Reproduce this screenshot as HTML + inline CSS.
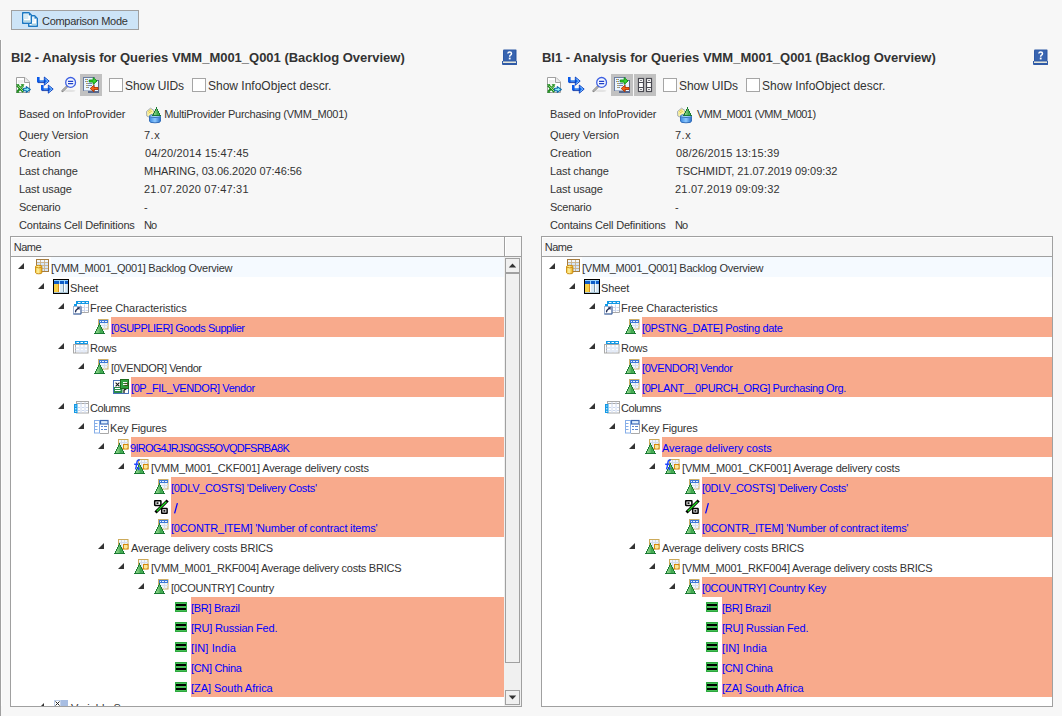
<!DOCTYPE html>
<html><head><meta charset="utf-8"><style>
html,body{margin:0;padding:0}
body{width:1062px;height:716px;overflow:hidden;position:relative;background:#f7f7f7;font-family:"Liberation Sans",sans-serif}
</style></head><body>
<svg width="0" height="0" style="position:absolute"><defs><linearGradient id="gPyr3" gradientUnits="userSpaceOnUse" x1="6" x2="15" y1="0" y2="0"><stop offset="0" stop-color="#a6e0a0"/><stop offset="0.45" stop-color="#6cc070"/><stop offset="0.6" stop-color="#3fa850"/><stop offset="1" stop-color="#5cc060"/></linearGradient>
<linearGradient id="gCyl" x1="0" x2="1" y1="0" y2="0"><stop offset="0" stop-color="#3a88e0"/><stop offset="0.5" stop-color="#8cc8ff"/><stop offset="1" stop-color="#2a70c8"/></linearGradient>
<linearGradient id="gPyr" gradientUnits="userSpaceOnUse" x1="1" x2="12" y1="0" y2="0"><stop offset="0" stop-color="#a6e0a0"/><stop offset="0.45" stop-color="#6cc070"/><stop offset="0.6" stop-color="#3fa850"/><stop offset="1" stop-color="#5cc060"/></linearGradient>
<linearGradient id="gPyr2" gradientUnits="userSpaceOnUse" x1="2" x2="13" y1="0" y2="0"><stop offset="0" stop-color="#a6e0a0"/><stop offset="0.45" stop-color="#6cc070"/><stop offset="0.6" stop-color="#3fa850"/><stop offset="1" stop-color="#5cc060"/></linearGradient>
<linearGradient id="gGreen" x1="0" x2="1" y1="0" y2="0"><stop offset="0" stop-color="#8fd88f"/><stop offset="0.5" stop-color="#3fae4f"/><stop offset="1" stop-color="#6ccf6c"/></linearGradient>
<linearGradient id="gGold" x1="0" x2="1"><stop offset="0" stop-color="#f7d24a"/><stop offset="0.4" stop-color="#fff1a0"/><stop offset="1" stop-color="#e8a812"/></linearGradient>





















</defs></svg>
<div style="position:absolute;left:0px;top:40px;width:1px;height:676px;background:#a0a0a0"></div><div style="position:absolute;left:1px;top:40px;width:1px;height:676px;background:#fdfdfd"></div><div style="position:absolute;left:11px;top:10px;width:126px;height:18px;border:1px solid #a0a0a0;background:#cde4f7"></div><svg style="position:absolute;left:22px;top:12px;overflow:visible" width="16" height="16"><path d="M6.7 3.7H12.6L15.3 6.4V14.3H6.7Z" fill="#fff" stroke="#1a78c2" stroke-width="1.4" stroke-linejoin="round"/>
  <rect x="8" y="5" width="4.5" height="5" fill="#e4f1f8"/>
  <rect x="9.5" y="11.5" width="5" height="1.6" fill="#a9d2e2"/>
  <circle cx="13.2" cy="5.8" r="0.9" fill="#1a78c2"/>
  <path d="M0.7 0.7H7L9.3 3V11.3H0.7Z" fill="#fff" stroke="#1a78c2" stroke-width="1.4" stroke-linejoin="round"/>
  <rect x="1.6" y="2" width="4.8" height="5" fill="#d6eaf4"/>
  <rect x="1.6" y="8.3" width="6.8" height="1.6" fill="#a9d2e2"/>
  <circle cx="7.6" cy="2.6" r="0.9" fill="#1a78c2"/></svg><svg style="position:absolute;left:501px;top:49px;overflow:visible" width="16" height="16"><path d="M2 1.5Q2 0.5 3 0.5H15Q15.5 0.5 15.5 1.5V14.5H2Z" fill="#2f5aa6"/>
  <path d="M1 12H16V15.5Q16 16 15 16H2Q1 16 1 15Z" fill="#2f5aa6"/>
  <rect x="2" y="12.5" width="13" height="1.4" fill="#f8f4e0"/>
  <rect x="3" y="1.5" width="11" height="10" fill="#3864b0"/>
  <path d="M6.8 4.5Q7 3 8.7 3Q10.5 3 10.5 4.6Q10.5 5.8 9.2 6.4Q8.7 6.7 8.7 7.7" stroke="#fff" stroke-width="1.5" fill="none"/>
  <rect x="7.8" y="8.6" width="1.8" height="1.8" fill="#fff"/></svg><svg style="position:absolute;left:15px;top:77px;overflow:visible" width="16" height="16"><path d="M1.5 0.5H10L14.5 5V15.5H1.5Z" fill="#fff" stroke="#a0a0a0"/>
  <path d="M9.5 0.5V5.5H14.5" fill="#ececec" stroke="#a0a0a0"/>
  <rect x="3" y="3" width="5.5" height="3.5" fill="#eeeeee"/>
  <path d="M8.3 8.2L2.2 14.8" stroke="#1d8a1d" stroke-width="2.2"/>
  <path d="M2.2 8.2L8.6 14.8" stroke="#1d8a1d" stroke-width="2.8"/>
  <path d="M2.8 8.6L8.2 14.2" stroke="#b8ec9c" stroke-width="0.9"/>
  <path d="M7.8 8.8L5.6 11.2" stroke="#b8ec9c" stroke-width="0.7"/>
  <path d="M1.2 7.8H4.2M5.8 7.8H9.2M1.2 15.2H4.2" stroke="#1d8a1d" stroke-width="1.1"/>
  <path d="M8.6 11.3H11.3V9.6L15.3 12.5L11.3 15.4V13.7H8.6Z" fill="#86f0f4" stroke="#0a66a8" stroke-width="1.1" stroke-linejoin="round"/></svg><svg style="position:absolute;left:37px;top:77px;overflow:visible" width="16" height="16"><g transform="translate(0,0)">
  <rect x="0" y="0" width="2.6" height="5.3" fill="#0a5ae8"/>
  <rect x="0" y="3" width="8.5" height="2.3" fill="#0a5ae8"/>
  <path d="M1 5.6H8" stroke="#002a9a" stroke-width="0.8"/>
  <path d="M2.6 3.9H8" stroke="#b8e8ff" stroke-width="0.8"/>
  <polygon points="7.3,0 12.2,4.1 7.3,8.2" fill="#0a64f0" stroke="#0034b8" stroke-width="0.8" stroke-linejoin="round"/>
  <path d="M8.2 1.6L10.6 4.1L8.2 6.6" stroke="#b8e8ff" stroke-width="0.9" fill="none"/>
</g><g transform="translate(4,8)">
  <rect x="0" y="0" width="2.6" height="5.3" fill="#0a5ae8"/>
  <rect x="0" y="3" width="8.5" height="2.3" fill="#0a5ae8"/>
  <path d="M1 5.6H8" stroke="#002a9a" stroke-width="0.8"/>
  <path d="M2.6 3.9H8" stroke="#b8e8ff" stroke-width="0.8"/>
  <polygon points="7.3,0 12.2,4.1 7.3,8.2" fill="#0a64f0" stroke="#0034b8" stroke-width="0.8" stroke-linejoin="round"/>
  <path d="M8.2 1.6L10.6 4.1L8.2 6.6" stroke="#b8e8ff" stroke-width="0.9" fill="none"/>
</g></svg><svg style="position:absolute;left:61px;top:77px;overflow:visible" width="16" height="16"><ellipse cx="8.5" cy="13.8" rx="6" ry="1.2" fill="#000" opacity="0.08"/>
  <path d="M1.5 14L6 9.5" stroke="#8a8a8a" stroke-width="2.4" stroke-linecap="round"/>
  <path d="M1.5 14L6 9.5" stroke="#d8d8d8" stroke-width="0.8"/>
  <circle cx="9.6" cy="5.4" r="4.9" fill="#f4f8ff" stroke="#3d5fe0" stroke-width="1.3"/>
  <path d="M7 4.3H12.2M7 6.6H12.2" stroke="#2040c8" stroke-width="1.2"/></svg><div style="position:absolute;left:80px;top:74px;width:22px;height:22px;background:#c1c1c1"></div><svg style="position:absolute;left:83px;top:77px;overflow:visible" width="16" height="16"><rect x="5.5" y="3.5" width="10" height="12" fill="#eaf6ff" stroke="#56688e"/>
  <rect x="0.5" y="0.5" width="11" height="13" fill="#eaf6ff" stroke="#6e7ea0"/>
  <rect x="1" y="1" width="10.5" height="12.5" fill="#eaf6ff"/>
  <path d="M6 14.5H15" stroke="#56688e"/>
  <path d="M2 2.5H5M2 4.5H5M3 6.5H9M3 8.5H9M3 10.5H6" stroke="#7088b8" stroke-width="1"/>
  <path d="M3 2.5H4M3 4.5H4M3.5 6.5H4.5M3.5 8.5H4.5M3.5 10.5H4.5" stroke="#f0b020" stroke-width="1"/>
  <path d="M6.2 3H10.2V0.6L14 4L10.2 7.4V5H6.2Z" fill="#36d436" stroke="#0c8a0c" stroke-width="0.9" stroke-linejoin="round"/>
  <path d="M15 10.5H11V8.2L7.2 11.5L11 14.8V12.5H15Z" fill="#f4601a" stroke="#b03800" stroke-width="0.9" stroke-linejoin="round"/></svg><div style="position:absolute;left:109px;top:78px;width:12px;height:12px;border:1px solid #a5a5a5;background:#fff"></div><div style="position:absolute;left:192px;top:78px;width:12px;height:12px;border:1px solid #a5a5a5;background:#fff"></div><svg style="position:absolute;left:146px;top:107px;overflow:visible" width="16" height="16"><path d="M0.5 4.5L4.5 1.2L8 3.5V8.5L4 10.5L0.8 9Z" fill="#fbf3a8" stroke="#9aa4b0" stroke-width="0.9"/>
  <path d="M2.2 4.6L5.2 2.6M2.6 6.2L5.8 4.2" stroke="#e2c23a" stroke-width="0.9"/>
  <path d="M3.5 9V14.2Q3.5 15.8 9 15.8Q14.5 15.8 14.5 14.2V9Z" fill="url(#gCyl)" stroke="#2a66b4" stroke-width="0.9"/>
  <ellipse cx="9" cy="9" rx="5.5" ry="1.5" fill="#a8d8ff" stroke="#2a66b4" stroke-width="0.9"/>
  <rect x="10" y="0" width="1" height="1" fill="#1a7a34"/><rect x="10" y="1" width="1" height="1" fill="#1a7a34"/><rect x="9" y="2" width="3" height="1" fill="#1a7a34"/><rect x="10" y="2" width="1" height="1" fill="url(#gPyr3)"/><rect x="9" y="3" width="3" height="1" fill="#1a7a34"/><rect x="10" y="3" width="1" height="1" fill="url(#gPyr3)"/><rect x="8" y="4" width="5" height="1" fill="#1a7a34"/><rect x="9" y="4" width="3" height="1" fill="url(#gPyr3)"/><rect x="8" y="5" width="5" height="1" fill="#1a7a34"/><rect x="9" y="5" width="3" height="1" fill="url(#gPyr3)"/><rect x="7" y="6" width="7" height="1" fill="#1a7a34"/><rect x="8" y="6" width="5" height="1" fill="url(#gPyr3)"/><rect x="7" y="7" width="7" height="1" fill="#1a7a34"/><rect x="8" y="7" width="5" height="1" fill="url(#gPyr3)"/><rect x="6" y="8" width="9" height="1" fill="#1a7a34"/></svg><div style="position:absolute;left:10px;top:236px;width:510px;height:469px;border:1px solid #a0a0a0;background:#fff"></div><div style="position:absolute;left:11px;top:237px;width:510px;height:19px;background:#f7f7f7;border-top:1px solid #fff;border-left:1px solid #fff;box-sizing:border-box"></div><div style="position:absolute;left:11px;top:256px;width:510px;height:1px;background:#a0a0a0"></div><div style="position:absolute;left:504px;top:237px;width:1px;height:19px;background:#a0a0a0"></div><div style="position:absolute;left:505px;top:237px;width:1px;height:19px;background:#fff"></div><div style="position:absolute;left:504px;top:257px;width:17px;height:449px;background:#f0f0f0"></div><div style="position:absolute;left:505px;top:258px;width:13px;height:13px;border:1px solid #a0a0a0;background:#f0f0f0"></div><svg style="position:absolute;left:505px;top:258px" width="15" height="15"><polygon points="3.8,9.6 11.2,9.6 7.5,5.4" fill="#333"/></svg><div style="position:absolute;left:505px;top:273px;width:13px;height:388px;border:1px solid #a0a0a0;background:#f0f0f0"></div><div style="position:absolute;left:505px;top:690px;width:13px;height:13px;border:1px solid #a0a0a0;background:#f0f0f0"></div><svg style="position:absolute;left:505px;top:690px" width="15" height="15"><polygon points="3.8,5.4 11.2,5.4 7.5,9.6" fill="#333"/></svg><div style="position:absolute;left:51px;top:257px;width:453px;height:20px;background:#f5faff"></div><svg style="position:absolute;left:18px;top:263px" width="6" height="6"><polygon points="6,0 6,6 0,6" fill="#333"/></svg><svg style="position:absolute;left:33px;top:258px;overflow:visible" width="16" height="16"><rect x="3.5" y="1.5" width="12" height="12" fill="#d4e6fa" stroke="#a67c3e"/>
  <rect x="4" y="2" width="11" height="2.5" fill="#f2f8ff"/>
  <path d="M4 4.5H15M4 7.5H15M4 10.5H15M7.5 2V13M11.5 2V13" stroke="#c8b089" stroke-width="0.9"/>
  <path d="M2.6 8.3Q2.6 7.3 5.75 7.3Q8.9 7.3 8.9 8.3V14.8Q8.9 15.8 5.75 15.8Q2.6 15.8 2.6 14.8Z" fill="url(#gGold)" stroke="#c98b12" stroke-width="1"/>
  <path d="M2.8 9.2Q5.75 10.6 8.7 9.2" stroke="#c98b12" fill="none" stroke-width="0.9"/></svg><svg style="position:absolute;left:38px;top:283px" width="6" height="6"><polygon points="6,0 6,6 0,6" fill="#333"/></svg><svg style="position:absolute;left:53px;top:278px;overflow:visible" width="16" height="16"><rect x="0.5" y="1.5" width="15" height="14" fill="#d8ebf8" stroke="#000"/>
  <rect x="1" y="2" width="14" height="1" fill="#9ad6ff"/>
  <rect x="1" y="3" width="14" height="3" fill="#0c5cc8"/>
  <rect x="6" y="2" width="1" height="4" fill="#9ad6ff"/>
  <rect x="11" y="2" width="1" height="4" fill="#9ad6ff"/>
  <rect x="1" y="6" width="4" height="8.5" fill="#f6d048"/>
  <rect x="5" y="6" width="1" height="8.5" fill="#d8901e"/>
  <rect x="6" y="6" width="1" height="8.5" fill="#ffffff"/>
  <rect x="7" y="6" width="3" height="8.5" fill="#d6e9f6"/>
  <rect x="10" y="6" width="1" height="8.5" fill="#7a98aa"/>
  <rect x="11" y="6" width="1" height="8.5" fill="#ffffff"/>
  <rect x="12" y="6" width="2.5" height="8.5" fill="#d6e9f6"/>
  <rect x="14.5" y="6" width="0.5" height="8.5" fill="#9ab4c4"/>
  <rect x="1" y="14" width="14" height="1" fill="#a9c4d4"/></svg><svg style="position:absolute;left:58px;top:303px" width="6" height="6"><polygon points="6,0 6,6 0,6" fill="#333"/></svg><svg style="position:absolute;left:73px;top:298px;overflow:visible" width="16" height="16"><rect x="3" y="3" width="13" height="3" fill="#1299e6"/>
  <path d="M5 4.5H7.5M9 4.5H11.5M13 4.5H15" stroke="#e8f6ff" stroke-width="1"/>
  <rect x="3" y="6" width="12.5" height="8.5" fill="#fff"/>
  <path d="M15.5 6V14.5H8" stroke="#a9a9a9" fill="none"/>
  <path d="M7.5 6.5V14M11.5 6.5V14M9 9.5H11M12.5 9.5H15M9 12.5H11M12.5 12.5H15" stroke="#ccd6ec" stroke-width="1"/>
  <rect x="1" y="6" width="3" height="2.5" fill="#1299e6"/>
  <rect x="0.5" y="8.5" width="7.5" height="7.5" fill="#fff" stroke="#9fb4d4"/>
  <path d="M8 8.5V16H0.5" stroke="#3d5e98" fill="none"/>
  <path d="M3 14.3Q2 13.3 3 12.3L5.6 9.9" stroke="#1a2650" stroke-width="1.3" fill="none"/>
  <polygon points="3.8,9.6 6.9,8.9 6.3,12" fill="#1a2650"/></svg><div style="position:absolute;left:111px;top:317px;width:393px;height:20px;background:#f8aa8c"></div><svg style="position:absolute;left:93px;top:318px;overflow:visible" width="16" height="16"><rect x="5.5" y="1.5" width="9.5" height="9.5" fill="#eef4fc" stroke="#cdb06a"/>
  <rect x="6" y="2" width="9" height="3" fill="#3f7ad8"/>
  <rect x="7" y="3" width="1" height="1" fill="#e8f0ff"/><rect x="9" y="3" width="2" height="1" fill="#e8f0ff"/><rect x="12" y="3" width="2" height="1" fill="#e8f0ff"/>
  <rect x="6" y="5" width="1" height="5.5" fill="#3f7ad8"/>
  <path d="M8 7.5H15M11.5 5V11" stroke="#d8e0ee"/>
  <rect x="6" y="5" width="1" height="1" fill="#1a7a34"/><rect x="6" y="6" width="1" height="1" fill="#1a7a34"/><rect x="5" y="7" width="3" height="1" fill="#1a7a34"/><rect x="6" y="7" width="1" height="1" fill="url(#gPyr)"/><rect x="5" y="8" width="3" height="1" fill="#1a7a34"/><rect x="6" y="8" width="1" height="1" fill="url(#gPyr)"/><rect x="4" y="9" width="5" height="1" fill="#1a7a34"/><rect x="5" y="9" width="3" height="1" fill="url(#gPyr)"/><rect x="4" y="10" width="5" height="1" fill="#1a7a34"/><rect x="5" y="10" width="3" height="1" fill="url(#gPyr)"/><rect x="3" y="11" width="7" height="1" fill="#1a7a34"/><rect x="4" y="11" width="5" height="1" fill="url(#gPyr)"/><rect x="3" y="12" width="7" height="1" fill="#1a7a34"/><rect x="4" y="12" width="5" height="1" fill="url(#gPyr)"/><rect x="2" y="13" width="9" height="1" fill="#1a7a34"/><rect x="3" y="13" width="7" height="1" fill="url(#gPyr)"/><rect x="2" y="14" width="9" height="1" fill="#1a7a34"/><rect x="3" y="14" width="7" height="1" fill="url(#gPyr)"/><rect x="1" y="15" width="11" height="1" fill="#1a7a34"/></svg><svg style="position:absolute;left:58px;top:343px" width="6" height="6"><polygon points="6,0 6,6 0,6" fill="#333"/></svg><svg style="position:absolute;left:73px;top:338px;overflow:visible" width="16" height="16"><rect x="2" y="3" width="13" height="3" fill="#1299e6"/>
  <path d="M3.5 4.5H6M7.5 4.5H10M11.5 4.5H14" stroke="#fff" stroke-width="1"/>
  <rect x="0.5" y="6.5" width="14.5" height="8.5" fill="#fff" stroke="#a9a9a9"/>
  <path d="M2.5 7V15" stroke="#a9a9a9"/>
  <path d="M7 7V15M11 7V15M2 10H6M8 10H10M12 10H14M2 13H6M8 13H10M12 13H14" stroke="#ccd8ee" stroke-width="1"/></svg><svg style="position:absolute;left:78px;top:363px" width="6" height="6"><polygon points="6,0 6,6 0,6" fill="#333"/></svg><svg style="position:absolute;left:93px;top:358px;overflow:visible" width="16" height="16"><rect x="5.5" y="1.5" width="9.5" height="9.5" fill="#eef4fc" stroke="#cdb06a"/>
  <rect x="6" y="2" width="9" height="3" fill="#3f7ad8"/>
  <rect x="7" y="3" width="1" height="1" fill="#e8f0ff"/><rect x="9" y="3" width="2" height="1" fill="#e8f0ff"/><rect x="12" y="3" width="2" height="1" fill="#e8f0ff"/>
  <rect x="6" y="5" width="1" height="5.5" fill="#3f7ad8"/>
  <path d="M8 7.5H15M11.5 5V11" stroke="#d8e0ee"/>
  <rect x="6" y="5" width="1" height="1" fill="#1a7a34"/><rect x="6" y="6" width="1" height="1" fill="#1a7a34"/><rect x="5" y="7" width="3" height="1" fill="#1a7a34"/><rect x="6" y="7" width="1" height="1" fill="url(#gPyr)"/><rect x="5" y="8" width="3" height="1" fill="#1a7a34"/><rect x="6" y="8" width="1" height="1" fill="url(#gPyr)"/><rect x="4" y="9" width="5" height="1" fill="#1a7a34"/><rect x="5" y="9" width="3" height="1" fill="url(#gPyr)"/><rect x="4" y="10" width="5" height="1" fill="#1a7a34"/><rect x="5" y="10" width="3" height="1" fill="url(#gPyr)"/><rect x="3" y="11" width="7" height="1" fill="#1a7a34"/><rect x="4" y="11" width="5" height="1" fill="url(#gPyr)"/><rect x="3" y="12" width="7" height="1" fill="#1a7a34"/><rect x="4" y="12" width="5" height="1" fill="url(#gPyr)"/><rect x="2" y="13" width="9" height="1" fill="#1a7a34"/><rect x="3" y="13" width="7" height="1" fill="url(#gPyr)"/><rect x="2" y="14" width="9" height="1" fill="#1a7a34"/><rect x="3" y="14" width="7" height="1" fill="url(#gPyr)"/><rect x="1" y="15" width="11" height="1" fill="#1a7a34"/></svg><div style="position:absolute;left:131px;top:377px;width:373px;height:20px;background:#f8aa8c"></div><svg style="position:absolute;left:113px;top:378px;overflow:visible" width="16" height="16"><rect x="0.5" y="2.5" width="15" height="13" fill="#fff" stroke="#4a72b8"/>
  <rect x="1" y="9" width="8.5" height="6" fill="#2a8a4a"/>
  <path d="M2 10.5H7M2 12.5H7.5" stroke="#fff" stroke-width="1"/>
  <path d="M2.6 4.6L6.4 8.4M6.4 4.6L2.6 8.4" stroke="#1a1a1a" stroke-width="1.1"/>
  <path d="M11 15V12.2L13.4 10.6" stroke="#1a1a1a" stroke-width="1.3" fill="none"/>
  <rect x="7.5" y="1.5" width="8" height="9" fill="#30a040" stroke="#1c6a1c" stroke-width="1"/>
  <path d="M10 4.5H14M10 6.5H14" stroke="#fff" stroke-width="1"/>
  <path d="M11.5 5.4H15M11.5 7.4H15" stroke="#4a2a10" stroke-width="0.8"/></svg><svg style="position:absolute;left:58px;top:403px" width="6" height="6"><polygon points="6,0 6,6 0,6" fill="#333"/></svg><svg style="position:absolute;left:73px;top:398px;overflow:visible" width="16" height="16"><rect x="3.5" y="3.5" width="12" height="11.5" fill="#fff" stroke="#a9a9a9"/>
  <path d="M4 5.5H15" stroke="#a9a9a9"/>
  <path d="M8 4V15M12 4V15M5 9.5H7M9 9.5H11M13 9.5H15M5 12.5H7M9 12.5H11M13 12.5H15" stroke="#ccd8ee"/>
  <rect x="1" y="6" width="3.5" height="9" fill="#1299e6"/>
  <path d="M2.8 7.5V8.5M2.8 10V11.5M2.8 12.8V14" stroke="#fff" stroke-width="1"/></svg><svg style="position:absolute;left:78px;top:423px" width="6" height="6"><polygon points="6,0 6,6 0,6" fill="#333"/></svg><svg style="position:absolute;left:93px;top:418px;overflow:visible" width="16" height="16"><rect x="1.5" y="2.5" width="5" height="12.5" fill="#fff" stroke="#86aee8"/>
  <path d="M2 5.5H4.5M2 8.5H4.5M2 11.5H4.5" stroke="#86aee8"/>
  <rect x="7" y="6" width="8.5" height="9" fill="#fff"/>
  <path d="M15.5 6V15.5H7" stroke="#a9a9a9" fill="none"/>
  <rect x="7.5" y="2.5" width="7.5" height="3.5" fill="#dff0ff" stroke="#3d6ab8" stroke-width="1.2"/>
  <path d="M8 8.5H10M11 8.5H14M8 11.5H10M11 11.5H14" stroke="#5a86d0"/></svg><div style="position:absolute;left:131px;top:437px;width:373px;height:20px;background:#f8aa8c"></div><svg style="position:absolute;left:98px;top:443px" width="6" height="6"><polygon points="6,0 6,6 0,6" fill="#333"/></svg><svg style="position:absolute;left:113px;top:438px;overflow:visible" width="16" height="16"><rect x="5.5" y="1.5" width="9.5" height="9" fill="#f2f6fc" stroke="#ccaa5a"/>
  <path d="M6 4.5H15M8.5 2V10M11.5 2V6" stroke="#d4dcec"/>
  <rect x="10.5" y="6.5" width="4.5" height="4.5" fill="#fff0a8" stroke="#d4880e" stroke-width="1.1"/>
  <path d="M12.75 7V11M11 8.75H15" stroke="#f8e090" stroke-width="0.6"/><rect x="6" y="5" width="1" height="1" fill="#1a7a34"/><rect x="6" y="6" width="1" height="1" fill="#1a7a34"/><rect x="5" y="7" width="3" height="1" fill="#1a7a34"/><rect x="6" y="7" width="1" height="1" fill="url(#gPyr)"/><rect x="5" y="8" width="3" height="1" fill="#1a7a34"/><rect x="6" y="8" width="1" height="1" fill="url(#gPyr)"/><rect x="4" y="9" width="5" height="1" fill="#1a7a34"/><rect x="5" y="9" width="3" height="1" fill="url(#gPyr)"/><rect x="4" y="10" width="5" height="1" fill="#1a7a34"/><rect x="5" y="10" width="3" height="1" fill="url(#gPyr)"/><rect x="3" y="11" width="7" height="1" fill="#1a7a34"/><rect x="4" y="11" width="5" height="1" fill="url(#gPyr)"/><rect x="3" y="12" width="7" height="1" fill="#1a7a34"/><rect x="4" y="12" width="5" height="1" fill="url(#gPyr)"/><rect x="2" y="13" width="9" height="1" fill="#1a7a34"/><rect x="3" y="13" width="7" height="1" fill="url(#gPyr)"/><rect x="2" y="14" width="9" height="1" fill="#1a7a34"/><rect x="3" y="14" width="7" height="1" fill="url(#gPyr)"/><rect x="1" y="15" width="11" height="1" fill="#1a7a34"/></svg><svg style="position:absolute;left:118px;top:463px" width="6" height="6"><polygon points="6,0 6,6 0,6" fill="#333"/></svg><svg style="position:absolute;left:133px;top:458px;overflow:visible" width="16" height="16"><rect x="5.5" y="1.5" width="9.5" height="9" fill="#f2f6fc" stroke="#ccaa5a"/>
  <path d="M6 4.5H15M8.5 2V10M11.5 2V6" stroke="#d4dcec"/>
  <rect x="10.5" y="6.5" width="4.5" height="4.5" fill="#fff0a8" stroke="#d4880e" stroke-width="1.1"/>
  <path d="M12.75 7V11M11 8.75H15" stroke="#f8e090" stroke-width="0.6"/><rect x="6" y="5" width="1" height="1" fill="#1a7a34"/><rect x="6" y="6" width="1" height="1" fill="#1a7a34"/><rect x="5" y="7" width="3" height="1" fill="#1a7a34"/><rect x="6" y="7" width="1" height="1" fill="url(#gPyr)"/><rect x="5" y="8" width="3" height="1" fill="#1a7a34"/><rect x="6" y="8" width="1" height="1" fill="url(#gPyr)"/><rect x="4" y="9" width="5" height="1" fill="#1a7a34"/><rect x="5" y="9" width="3" height="1" fill="url(#gPyr)"/><rect x="4" y="10" width="5" height="1" fill="#1a7a34"/><rect x="5" y="10" width="3" height="1" fill="url(#gPyr)"/><rect x="3" y="11" width="7" height="1" fill="#1a7a34"/><rect x="4" y="11" width="5" height="1" fill="url(#gPyr)"/><rect x="3" y="12" width="7" height="1" fill="#1a7a34"/><rect x="4" y="12" width="5" height="1" fill="url(#gPyr)"/><rect x="2" y="13" width="9" height="1" fill="#1a7a34"/><rect x="3" y="13" width="7" height="1" fill="url(#gPyr)"/><rect x="2" y="14" width="9" height="1" fill="#1a7a34"/><rect x="3" y="14" width="7" height="1" fill="url(#gPyr)"/><rect x="1" y="15" width="11" height="1" fill="#1a7a34"/>
  <path d="M6.8 2.3C5.2 1.6 4.2 2.6 3.9 4.5L3.3 8.2L2.6 11.4M1.2 6.2H5.6" stroke="#1f46ff" stroke-width="1.5" fill="none"/>
  <path d="M4.8 9.3L6 10.6L5 12" stroke="#1f46ff" stroke-width="1.3" fill="none"/></svg><div style="position:absolute;left:171px;top:477px;width:333px;height:20px;background:#f8aa8c"></div><svg style="position:absolute;left:153px;top:478px;overflow:visible" width="16" height="16"><rect x="5.5" y="1.5" width="9.5" height="9.5" fill="#eef4fc" stroke="#cdb06a"/>
  <rect x="6" y="2" width="9" height="3" fill="#3f7ad8"/>
  <rect x="7" y="3" width="1" height="1" fill="#e8f0ff"/><rect x="9" y="3" width="2" height="1" fill="#e8f0ff"/><rect x="12" y="3" width="2" height="1" fill="#e8f0ff"/>
  <rect x="6" y="5" width="1" height="5.5" fill="#3f7ad8"/>
  <path d="M8 7.5H15M11.5 5V11" stroke="#d8e0ee"/>
  <rect x="6" y="5" width="1" height="1" fill="#1a7a34"/><rect x="6" y="6" width="1" height="1" fill="#1a7a34"/><rect x="5" y="7" width="3" height="1" fill="#1a7a34"/><rect x="6" y="7" width="1" height="1" fill="url(#gPyr)"/><rect x="5" y="8" width="3" height="1" fill="#1a7a34"/><rect x="6" y="8" width="1" height="1" fill="url(#gPyr)"/><rect x="4" y="9" width="5" height="1" fill="#1a7a34"/><rect x="5" y="9" width="3" height="1" fill="url(#gPyr)"/><rect x="4" y="10" width="5" height="1" fill="#1a7a34"/><rect x="5" y="10" width="3" height="1" fill="url(#gPyr)"/><rect x="3" y="11" width="7" height="1" fill="#1a7a34"/><rect x="4" y="11" width="5" height="1" fill="url(#gPyr)"/><rect x="3" y="12" width="7" height="1" fill="#1a7a34"/><rect x="4" y="12" width="5" height="1" fill="url(#gPyr)"/><rect x="2" y="13" width="9" height="1" fill="#1a7a34"/><rect x="3" y="13" width="7" height="1" fill="url(#gPyr)"/><rect x="2" y="14" width="9" height="1" fill="#1a7a34"/><rect x="3" y="14" width="7" height="1" fill="url(#gPyr)"/><rect x="1" y="15" width="11" height="1" fill="#1a7a34"/></svg><div style="position:absolute;left:171px;top:497px;width:333px;height:20px;background:#f8aa8c"></div><svg style="position:absolute;left:153px;top:498px;overflow:visible" width="16" height="16"><rect x="1.7" y="2.7" width="6.2" height="4.8" rx="0.4" fill="#fff" stroke="#000" stroke-width="1.5"/>
  <rect x="3.5" y="4.3" width="2" height="1.6" fill="#000"/>
  <rect x="8.7" y="10.5" width="5.4" height="4.8" rx="0.4" fill="#fff" stroke="#000" stroke-width="1.5"/>
  <rect x="10.4" y="12.1" width="2" height="1.6" fill="#000"/>
  <path d="M3.6 13.4L13.6 3.6" stroke="#000" stroke-width="3" stroke-linecap="square"/>
  <path d="M3.8 13.2L13.4 3.8" stroke="#20e020" stroke-width="1.3"/></svg><svg style="position:absolute;left:171px;top:497px;overflow:visible" width="10" height="20"><path d="M3.6 16.3L6.4 6.2" stroke="#0000ff" stroke-width="1.25"/></svg><div style="position:absolute;left:171px;top:517px;width:333px;height:20px;background:#f8aa8c"></div><svg style="position:absolute;left:153px;top:518px;overflow:visible" width="16" height="16"><rect x="5.5" y="1.5" width="9.5" height="9.5" fill="#eef4fc" stroke="#cdb06a"/>
  <rect x="6" y="2" width="9" height="3" fill="#3f7ad8"/>
  <rect x="7" y="3" width="1" height="1" fill="#e8f0ff"/><rect x="9" y="3" width="2" height="1" fill="#e8f0ff"/><rect x="12" y="3" width="2" height="1" fill="#e8f0ff"/>
  <rect x="6" y="5" width="1" height="5.5" fill="#3f7ad8"/>
  <path d="M8 7.5H15M11.5 5V11" stroke="#d8e0ee"/>
  <rect x="6" y="5" width="1" height="1" fill="#1a7a34"/><rect x="6" y="6" width="1" height="1" fill="#1a7a34"/><rect x="5" y="7" width="3" height="1" fill="#1a7a34"/><rect x="6" y="7" width="1" height="1" fill="url(#gPyr)"/><rect x="5" y="8" width="3" height="1" fill="#1a7a34"/><rect x="6" y="8" width="1" height="1" fill="url(#gPyr)"/><rect x="4" y="9" width="5" height="1" fill="#1a7a34"/><rect x="5" y="9" width="3" height="1" fill="url(#gPyr)"/><rect x="4" y="10" width="5" height="1" fill="#1a7a34"/><rect x="5" y="10" width="3" height="1" fill="url(#gPyr)"/><rect x="3" y="11" width="7" height="1" fill="#1a7a34"/><rect x="4" y="11" width="5" height="1" fill="url(#gPyr)"/><rect x="3" y="12" width="7" height="1" fill="#1a7a34"/><rect x="4" y="12" width="5" height="1" fill="url(#gPyr)"/><rect x="2" y="13" width="9" height="1" fill="#1a7a34"/><rect x="3" y="13" width="7" height="1" fill="url(#gPyr)"/><rect x="2" y="14" width="9" height="1" fill="#1a7a34"/><rect x="3" y="14" width="7" height="1" fill="url(#gPyr)"/><rect x="1" y="15" width="11" height="1" fill="#1a7a34"/></svg><svg style="position:absolute;left:98px;top:543px" width="6" height="6"><polygon points="6,0 6,6 0,6" fill="#333"/></svg><svg style="position:absolute;left:113px;top:538px;overflow:visible" width="16" height="16"><rect x="5.5" y="1.5" width="9.5" height="9" fill="#f2f6fc" stroke="#ccaa5a"/>
  <path d="M6 4.5H15M8.5 2V10M11.5 2V6" stroke="#d4dcec"/>
  <rect x="10.5" y="6.5" width="4.5" height="4.5" fill="#fff0a8" stroke="#d4880e" stroke-width="1.1"/>
  <path d="M12.75 7V11M11 8.75H15" stroke="#f8e090" stroke-width="0.6"/><rect x="6" y="5" width="1" height="1" fill="#1a7a34"/><rect x="6" y="6" width="1" height="1" fill="#1a7a34"/><rect x="5" y="7" width="3" height="1" fill="#1a7a34"/><rect x="6" y="7" width="1" height="1" fill="url(#gPyr)"/><rect x="5" y="8" width="3" height="1" fill="#1a7a34"/><rect x="6" y="8" width="1" height="1" fill="url(#gPyr)"/><rect x="4" y="9" width="5" height="1" fill="#1a7a34"/><rect x="5" y="9" width="3" height="1" fill="url(#gPyr)"/><rect x="4" y="10" width="5" height="1" fill="#1a7a34"/><rect x="5" y="10" width="3" height="1" fill="url(#gPyr)"/><rect x="3" y="11" width="7" height="1" fill="#1a7a34"/><rect x="4" y="11" width="5" height="1" fill="url(#gPyr)"/><rect x="3" y="12" width="7" height="1" fill="#1a7a34"/><rect x="4" y="12" width="5" height="1" fill="url(#gPyr)"/><rect x="2" y="13" width="9" height="1" fill="#1a7a34"/><rect x="3" y="13" width="7" height="1" fill="url(#gPyr)"/><rect x="2" y="14" width="9" height="1" fill="#1a7a34"/><rect x="3" y="14" width="7" height="1" fill="url(#gPyr)"/><rect x="1" y="15" width="11" height="1" fill="#1a7a34"/></svg><svg style="position:absolute;left:118px;top:563px" width="6" height="6"><polygon points="6,0 6,6 0,6" fill="#333"/></svg><svg style="position:absolute;left:133px;top:558px;overflow:visible" width="16" height="16"><rect x="5.5" y="1.5" width="9.5" height="9" fill="#f2f6fc" stroke="#ccaa5a"/>
  <path d="M6 4.5H15M8.5 2V10M11.5 2V6" stroke="#d4dcec"/>
  <rect x="10.5" y="6.5" width="4.5" height="4.5" fill="#fff0a8" stroke="#d4880e" stroke-width="1.1"/>
  <path d="M12.75 7V11M11 8.75H15" stroke="#f8e090" stroke-width="0.6"/><rect x="6" y="5" width="1" height="1" fill="#1a7a34"/><rect x="6" y="6" width="1" height="1" fill="#1a7a34"/><rect x="5" y="7" width="3" height="1" fill="#1a7a34"/><rect x="6" y="7" width="1" height="1" fill="url(#gPyr)"/><rect x="5" y="8" width="3" height="1" fill="#1a7a34"/><rect x="6" y="8" width="1" height="1" fill="url(#gPyr)"/><rect x="4" y="9" width="5" height="1" fill="#1a7a34"/><rect x="5" y="9" width="3" height="1" fill="url(#gPyr)"/><rect x="4" y="10" width="5" height="1" fill="#1a7a34"/><rect x="5" y="10" width="3" height="1" fill="url(#gPyr)"/><rect x="3" y="11" width="7" height="1" fill="#1a7a34"/><rect x="4" y="11" width="5" height="1" fill="url(#gPyr)"/><rect x="3" y="12" width="7" height="1" fill="#1a7a34"/><rect x="4" y="12" width="5" height="1" fill="url(#gPyr)"/><rect x="2" y="13" width="9" height="1" fill="#1a7a34"/><rect x="3" y="13" width="7" height="1" fill="url(#gPyr)"/><rect x="2" y="14" width="9" height="1" fill="#1a7a34"/><rect x="3" y="14" width="7" height="1" fill="url(#gPyr)"/><rect x="1" y="15" width="11" height="1" fill="#1a7a34"/></svg><svg style="position:absolute;left:138px;top:583px" width="6" height="6"><polygon points="6,0 6,6 0,6" fill="#333"/></svg><svg style="position:absolute;left:153px;top:578px;overflow:visible" width="16" height="16"><rect x="5.5" y="1.5" width="9.5" height="9.5" fill="#eef4fc" stroke="#cdb06a"/>
  <rect x="6" y="2" width="9" height="3" fill="#3f7ad8"/>
  <rect x="7" y="3" width="1" height="1" fill="#e8f0ff"/><rect x="9" y="3" width="2" height="1" fill="#e8f0ff"/><rect x="12" y="3" width="2" height="1" fill="#e8f0ff"/>
  <rect x="6" y="5" width="1" height="5.5" fill="#3f7ad8"/>
  <path d="M8 7.5H15M11.5 5V11" stroke="#d8e0ee"/>
  <rect x="6" y="5" width="1" height="1" fill="#1a7a34"/><rect x="6" y="6" width="1" height="1" fill="#1a7a34"/><rect x="5" y="7" width="3" height="1" fill="#1a7a34"/><rect x="6" y="7" width="1" height="1" fill="url(#gPyr)"/><rect x="5" y="8" width="3" height="1" fill="#1a7a34"/><rect x="6" y="8" width="1" height="1" fill="url(#gPyr)"/><rect x="4" y="9" width="5" height="1" fill="#1a7a34"/><rect x="5" y="9" width="3" height="1" fill="url(#gPyr)"/><rect x="4" y="10" width="5" height="1" fill="#1a7a34"/><rect x="5" y="10" width="3" height="1" fill="url(#gPyr)"/><rect x="3" y="11" width="7" height="1" fill="#1a7a34"/><rect x="4" y="11" width="5" height="1" fill="url(#gPyr)"/><rect x="3" y="12" width="7" height="1" fill="#1a7a34"/><rect x="4" y="12" width="5" height="1" fill="url(#gPyr)"/><rect x="2" y="13" width="9" height="1" fill="#1a7a34"/><rect x="3" y="13" width="7" height="1" fill="url(#gPyr)"/><rect x="2" y="14" width="9" height="1" fill="#1a7a34"/><rect x="3" y="14" width="7" height="1" fill="url(#gPyr)"/><rect x="1" y="15" width="11" height="1" fill="#1a7a34"/></svg><div style="position:absolute;left:191px;top:597px;width:313px;height:20px;background:#f8aa8c"></div><svg style="position:absolute;left:173px;top:598px;overflow:visible" width="16" height="16"><rect x="2" y="4" width="12" height="10" fill="#46bf56"/>
  <path d="M2.5 4.5H13.5V13.5H2.5Z" stroke="#2da83e" fill="none"/>
  <rect x="3" y="6" width="10" height="2" fill="#000"/>
  <rect x="3" y="10" width="10" height="2" fill="#000"/></svg><div style="position:absolute;left:191px;top:617px;width:313px;height:20px;background:#f8aa8c"></div><svg style="position:absolute;left:173px;top:618px;overflow:visible" width="16" height="16"><rect x="2" y="4" width="12" height="10" fill="#46bf56"/>
  <path d="M2.5 4.5H13.5V13.5H2.5Z" stroke="#2da83e" fill="none"/>
  <rect x="3" y="6" width="10" height="2" fill="#000"/>
  <rect x="3" y="10" width="10" height="2" fill="#000"/></svg><div style="position:absolute;left:191px;top:637px;width:313px;height:20px;background:#f8aa8c"></div><svg style="position:absolute;left:173px;top:638px;overflow:visible" width="16" height="16"><rect x="2" y="4" width="12" height="10" fill="#46bf56"/>
  <path d="M2.5 4.5H13.5V13.5H2.5Z" stroke="#2da83e" fill="none"/>
  <rect x="3" y="6" width="10" height="2" fill="#000"/>
  <rect x="3" y="10" width="10" height="2" fill="#000"/></svg><div style="position:absolute;left:191px;top:657px;width:313px;height:20px;background:#f8aa8c"></div><svg style="position:absolute;left:173px;top:658px;overflow:visible" width="16" height="16"><rect x="2" y="4" width="12" height="10" fill="#46bf56"/>
  <path d="M2.5 4.5H13.5V13.5H2.5Z" stroke="#2da83e" fill="none"/>
  <rect x="3" y="6" width="10" height="2" fill="#000"/>
  <rect x="3" y="10" width="10" height="2" fill="#000"/></svg><div style="position:absolute;left:191px;top:677px;width:313px;height:20px;background:#f8aa8c"></div><svg style="position:absolute;left:173px;top:678px;overflow:visible" width="16" height="16"><rect x="2" y="4" width="12" height="10" fill="#46bf56"/>
  <path d="M2.5 4.5H13.5V13.5H2.5Z" stroke="#2da83e" fill="none"/>
  <rect x="3" y="6" width="10" height="2" fill="#000"/>
  <rect x="3" y="10" width="10" height="2" fill="#000"/></svg><svg style="position:absolute;left:38px;top:703px" width="6" height="6"><polygon points="6,0 6,6 0,6" fill="#333"/></svg><svg style="position:absolute;left:53px;top:698px;overflow:visible" width="16" height="16"><rect x="1" y="2" width="14" height="13" fill="#a7bde2"/>
  <rect x="1.5" y="2.5" width="6" height="6" fill="#fff" stroke="#c0d0ea"/>
  <path d="M2.5 3.5L6.5 7.5M6.5 3.5L2.5 7.5" stroke="#222"/></svg><svg style="position:absolute;left:1032px;top:49px;overflow:visible" width="16" height="16"><path d="M2 1.5Q2 0.5 3 0.5H15Q15.5 0.5 15.5 1.5V14.5H2Z" fill="#2f5aa6"/>
  <path d="M1 12H16V15.5Q16 16 15 16H2Q1 16 1 15Z" fill="#2f5aa6"/>
  <rect x="2" y="12.5" width="13" height="1.4" fill="#f8f4e0"/>
  <rect x="3" y="1.5" width="11" height="10" fill="#3864b0"/>
  <path d="M6.8 4.5Q7 3 8.7 3Q10.5 3 10.5 4.6Q10.5 5.8 9.2 6.4Q8.7 6.7 8.7 7.7" stroke="#fff" stroke-width="1.5" fill="none"/>
  <rect x="7.8" y="8.6" width="1.8" height="1.8" fill="#fff"/></svg><svg style="position:absolute;left:546px;top:77px;overflow:visible" width="16" height="16"><path d="M1.5 0.5H10L14.5 5V15.5H1.5Z" fill="#fff" stroke="#a0a0a0"/>
  <path d="M9.5 0.5V5.5H14.5" fill="#ececec" stroke="#a0a0a0"/>
  <rect x="3" y="3" width="5.5" height="3.5" fill="#eeeeee"/>
  <path d="M8.3 8.2L2.2 14.8" stroke="#1d8a1d" stroke-width="2.2"/>
  <path d="M2.2 8.2L8.6 14.8" stroke="#1d8a1d" stroke-width="2.8"/>
  <path d="M2.8 8.6L8.2 14.2" stroke="#b8ec9c" stroke-width="0.9"/>
  <path d="M7.8 8.8L5.6 11.2" stroke="#b8ec9c" stroke-width="0.7"/>
  <path d="M1.2 7.8H4.2M5.8 7.8H9.2M1.2 15.2H4.2" stroke="#1d8a1d" stroke-width="1.1"/>
  <path d="M8.6 11.3H11.3V9.6L15.3 12.5L11.3 15.4V13.7H8.6Z" fill="#86f0f4" stroke="#0a66a8" stroke-width="1.1" stroke-linejoin="round"/></svg><svg style="position:absolute;left:568px;top:77px;overflow:visible" width="16" height="16"><g transform="translate(0,0)">
  <rect x="0" y="0" width="2.6" height="5.3" fill="#0a5ae8"/>
  <rect x="0" y="3" width="8.5" height="2.3" fill="#0a5ae8"/>
  <path d="M1 5.6H8" stroke="#002a9a" stroke-width="0.8"/>
  <path d="M2.6 3.9H8" stroke="#b8e8ff" stroke-width="0.8"/>
  <polygon points="7.3,0 12.2,4.1 7.3,8.2" fill="#0a64f0" stroke="#0034b8" stroke-width="0.8" stroke-linejoin="round"/>
  <path d="M8.2 1.6L10.6 4.1L8.2 6.6" stroke="#b8e8ff" stroke-width="0.9" fill="none"/>
</g><g transform="translate(4,8)">
  <rect x="0" y="0" width="2.6" height="5.3" fill="#0a5ae8"/>
  <rect x="0" y="3" width="8.5" height="2.3" fill="#0a5ae8"/>
  <path d="M1 5.6H8" stroke="#002a9a" stroke-width="0.8"/>
  <path d="M2.6 3.9H8" stroke="#b8e8ff" stroke-width="0.8"/>
  <polygon points="7.3,0 12.2,4.1 7.3,8.2" fill="#0a64f0" stroke="#0034b8" stroke-width="0.8" stroke-linejoin="round"/>
  <path d="M8.2 1.6L10.6 4.1L8.2 6.6" stroke="#b8e8ff" stroke-width="0.9" fill="none"/>
</g></svg><svg style="position:absolute;left:592px;top:77px;overflow:visible" width="16" height="16"><ellipse cx="8.5" cy="13.8" rx="6" ry="1.2" fill="#000" opacity="0.08"/>
  <path d="M1.5 14L6 9.5" stroke="#8a8a8a" stroke-width="2.4" stroke-linecap="round"/>
  <path d="M1.5 14L6 9.5" stroke="#d8d8d8" stroke-width="0.8"/>
  <circle cx="9.6" cy="5.4" r="4.9" fill="#f4f8ff" stroke="#3d5fe0" stroke-width="1.3"/>
  <path d="M7 4.3H12.2M7 6.6H12.2" stroke="#2040c8" stroke-width="1.2"/></svg><div style="position:absolute;left:611px;top:74px;width:22px;height:22px;background:#c1c1c1"></div><svg style="position:absolute;left:614px;top:77px;overflow:visible" width="16" height="16"><rect x="5.5" y="3.5" width="10" height="12" fill="#eaf6ff" stroke="#56688e"/>
  <rect x="0.5" y="0.5" width="11" height="13" fill="#eaf6ff" stroke="#6e7ea0"/>
  <rect x="1" y="1" width="10.5" height="12.5" fill="#eaf6ff"/>
  <path d="M6 14.5H15" stroke="#56688e"/>
  <path d="M2 2.5H5M2 4.5H5M3 6.5H9M3 8.5H9M3 10.5H6" stroke="#7088b8" stroke-width="1"/>
  <path d="M3 2.5H4M3 4.5H4M3.5 6.5H4.5M3.5 8.5H4.5M3.5 10.5H4.5" stroke="#f0b020" stroke-width="1"/>
  <path d="M6.2 3H10.2V0.6L14 4L10.2 7.4V5H6.2Z" fill="#36d436" stroke="#0c8a0c" stroke-width="0.9" stroke-linejoin="round"/>
  <path d="M15 10.5H11V8.2L7.2 11.5L11 14.8V12.5H15Z" fill="#f4601a" stroke="#b03800" stroke-width="0.9" stroke-linejoin="round"/></svg><div style="position:absolute;left:634px;top:74px;width:22px;height:22px;background:#c1c1c1"></div><svg style="position:absolute;left:637px;top:77px;overflow:visible" width="16" height="16"><rect x="1.5" y="1.5" width="5" height="13" fill="#fff" stroke="#4a4a52" stroke-width="1.2"/>
  <rect x="9.5" y="1.5" width="5" height="13" fill="#fff" stroke="#4a4a52" stroke-width="1.2"/>
  <path d="M1.5 5.5H6.5M1.5 10.5H6.5M9.5 5.5H14.5M9.5 10.5H14.5" stroke="#4a4a52" stroke-width="1.2"/>
  <path d="M3.3 3.5H4.7M3.3 12.5H4.7M11.3 3.5H12.7M11.3 12.5H12.7" stroke="#4a4a52" stroke-width="1.2"/></svg><div style="position:absolute;left:663px;top:78px;width:12px;height:12px;border:1px solid #a5a5a5;background:#fff"></div><div style="position:absolute;left:746px;top:78px;width:12px;height:12px;border:1px solid #a5a5a5;background:#fff"></div><svg style="position:absolute;left:677px;top:107px;overflow:visible" width="16" height="16"><path d="M0.5 4.5L4.5 1.2L8 3.5V8.5L4 10.5L0.8 9Z" fill="#fbf3a8" stroke="#9aa4b0" stroke-width="0.9"/>
  <path d="M2.2 4.6L5.2 2.6M2.6 6.2L5.8 4.2" stroke="#e2c23a" stroke-width="0.9"/>
  <path d="M3.5 9V14.2Q3.5 15.8 9 15.8Q14.5 15.8 14.5 14.2V9Z" fill="url(#gCyl)" stroke="#2a66b4" stroke-width="0.9"/>
  <ellipse cx="9" cy="9" rx="5.5" ry="1.5" fill="#a8d8ff" stroke="#2a66b4" stroke-width="0.9"/>
  <rect x="10" y="0" width="1" height="1" fill="#1a7a34"/><rect x="10" y="1" width="1" height="1" fill="#1a7a34"/><rect x="9" y="2" width="3" height="1" fill="#1a7a34"/><rect x="10" y="2" width="1" height="1" fill="url(#gPyr3)"/><rect x="9" y="3" width="3" height="1" fill="#1a7a34"/><rect x="10" y="3" width="1" height="1" fill="url(#gPyr3)"/><rect x="8" y="4" width="5" height="1" fill="#1a7a34"/><rect x="9" y="4" width="3" height="1" fill="url(#gPyr3)"/><rect x="8" y="5" width="5" height="1" fill="#1a7a34"/><rect x="9" y="5" width="3" height="1" fill="url(#gPyr3)"/><rect x="7" y="6" width="7" height="1" fill="#1a7a34"/><rect x="8" y="6" width="5" height="1" fill="url(#gPyr3)"/><rect x="7" y="7" width="7" height="1" fill="#1a7a34"/><rect x="8" y="7" width="5" height="1" fill="url(#gPyr3)"/><rect x="6" y="8" width="9" height="1" fill="#1a7a34"/></svg><div style="position:absolute;left:541px;top:236px;width:510px;height:469px;border:1px solid #a0a0a0;background:#fff"></div><div style="position:absolute;left:542px;top:237px;width:510px;height:19px;background:#f7f7f7;border-top:1px solid #fff;border-left:1px solid #fff;box-sizing:border-box"></div><div style="position:absolute;left:542px;top:256px;width:510px;height:1px;background:#a0a0a0"></div><div style="position:absolute;left:582px;top:257px;width:470px;height:20px;background:#f5faff"></div><svg style="position:absolute;left:549px;top:263px" width="6" height="6"><polygon points="6,0 6,6 0,6" fill="#333"/></svg><svg style="position:absolute;left:564px;top:258px;overflow:visible" width="16" height="16"><rect x="3.5" y="1.5" width="12" height="12" fill="#d4e6fa" stroke="#a67c3e"/>
  <rect x="4" y="2" width="11" height="2.5" fill="#f2f8ff"/>
  <path d="M4 4.5H15M4 7.5H15M4 10.5H15M7.5 2V13M11.5 2V13" stroke="#c8b089" stroke-width="0.9"/>
  <path d="M2.6 8.3Q2.6 7.3 5.75 7.3Q8.9 7.3 8.9 8.3V14.8Q8.9 15.8 5.75 15.8Q2.6 15.8 2.6 14.8Z" fill="url(#gGold)" stroke="#c98b12" stroke-width="1"/>
  <path d="M2.8 9.2Q5.75 10.6 8.7 9.2" stroke="#c98b12" fill="none" stroke-width="0.9"/></svg><svg style="position:absolute;left:569px;top:283px" width="6" height="6"><polygon points="6,0 6,6 0,6" fill="#333"/></svg><svg style="position:absolute;left:584px;top:278px;overflow:visible" width="16" height="16"><rect x="0.5" y="1.5" width="15" height="14" fill="#d8ebf8" stroke="#000"/>
  <rect x="1" y="2" width="14" height="1" fill="#9ad6ff"/>
  <rect x="1" y="3" width="14" height="3" fill="#0c5cc8"/>
  <rect x="6" y="2" width="1" height="4" fill="#9ad6ff"/>
  <rect x="11" y="2" width="1" height="4" fill="#9ad6ff"/>
  <rect x="1" y="6" width="4" height="8.5" fill="#f6d048"/>
  <rect x="5" y="6" width="1" height="8.5" fill="#d8901e"/>
  <rect x="6" y="6" width="1" height="8.5" fill="#ffffff"/>
  <rect x="7" y="6" width="3" height="8.5" fill="#d6e9f6"/>
  <rect x="10" y="6" width="1" height="8.5" fill="#7a98aa"/>
  <rect x="11" y="6" width="1" height="8.5" fill="#ffffff"/>
  <rect x="12" y="6" width="2.5" height="8.5" fill="#d6e9f6"/>
  <rect x="14.5" y="6" width="0.5" height="8.5" fill="#9ab4c4"/>
  <rect x="1" y="14" width="14" height="1" fill="#a9c4d4"/></svg><svg style="position:absolute;left:589px;top:303px" width="6" height="6"><polygon points="6,0 6,6 0,6" fill="#333"/></svg><svg style="position:absolute;left:604px;top:298px;overflow:visible" width="16" height="16"><rect x="3" y="3" width="13" height="3" fill="#1299e6"/>
  <path d="M5 4.5H7.5M9 4.5H11.5M13 4.5H15" stroke="#e8f6ff" stroke-width="1"/>
  <rect x="3" y="6" width="12.5" height="8.5" fill="#fff"/>
  <path d="M15.5 6V14.5H8" stroke="#a9a9a9" fill="none"/>
  <path d="M7.5 6.5V14M11.5 6.5V14M9 9.5H11M12.5 9.5H15M9 12.5H11M12.5 12.5H15" stroke="#ccd6ec" stroke-width="1"/>
  <rect x="1" y="6" width="3" height="2.5" fill="#1299e6"/>
  <rect x="0.5" y="8.5" width="7.5" height="7.5" fill="#fff" stroke="#9fb4d4"/>
  <path d="M8 8.5V16H0.5" stroke="#3d5e98" fill="none"/>
  <path d="M3 14.3Q2 13.3 3 12.3L5.6 9.9" stroke="#1a2650" stroke-width="1.3" fill="none"/>
  <polygon points="3.8,9.6 6.9,8.9 6.3,12" fill="#1a2650"/></svg><div style="position:absolute;left:642px;top:317px;width:410px;height:20px;background:#f8aa8c"></div><svg style="position:absolute;left:624px;top:318px;overflow:visible" width="16" height="16"><rect x="5.5" y="1.5" width="9.5" height="9.5" fill="#eef4fc" stroke="#cdb06a"/>
  <rect x="6" y="2" width="9" height="3" fill="#3f7ad8"/>
  <rect x="7" y="3" width="1" height="1" fill="#e8f0ff"/><rect x="9" y="3" width="2" height="1" fill="#e8f0ff"/><rect x="12" y="3" width="2" height="1" fill="#e8f0ff"/>
  <rect x="6" y="5" width="1" height="5.5" fill="#3f7ad8"/>
  <path d="M8 7.5H15M11.5 5V11" stroke="#d8e0ee"/>
  <rect x="6" y="5" width="1" height="1" fill="#1a7a34"/><rect x="6" y="6" width="1" height="1" fill="#1a7a34"/><rect x="5" y="7" width="3" height="1" fill="#1a7a34"/><rect x="6" y="7" width="1" height="1" fill="url(#gPyr)"/><rect x="5" y="8" width="3" height="1" fill="#1a7a34"/><rect x="6" y="8" width="1" height="1" fill="url(#gPyr)"/><rect x="4" y="9" width="5" height="1" fill="#1a7a34"/><rect x="5" y="9" width="3" height="1" fill="url(#gPyr)"/><rect x="4" y="10" width="5" height="1" fill="#1a7a34"/><rect x="5" y="10" width="3" height="1" fill="url(#gPyr)"/><rect x="3" y="11" width="7" height="1" fill="#1a7a34"/><rect x="4" y="11" width="5" height="1" fill="url(#gPyr)"/><rect x="3" y="12" width="7" height="1" fill="#1a7a34"/><rect x="4" y="12" width="5" height="1" fill="url(#gPyr)"/><rect x="2" y="13" width="9" height="1" fill="#1a7a34"/><rect x="3" y="13" width="7" height="1" fill="url(#gPyr)"/><rect x="2" y="14" width="9" height="1" fill="#1a7a34"/><rect x="3" y="14" width="7" height="1" fill="url(#gPyr)"/><rect x="1" y="15" width="11" height="1" fill="#1a7a34"/></svg><svg style="position:absolute;left:589px;top:343px" width="6" height="6"><polygon points="6,0 6,6 0,6" fill="#333"/></svg><svg style="position:absolute;left:604px;top:338px;overflow:visible" width="16" height="16"><rect x="2" y="3" width="13" height="3" fill="#1299e6"/>
  <path d="M3.5 4.5H6M7.5 4.5H10M11.5 4.5H14" stroke="#fff" stroke-width="1"/>
  <rect x="0.5" y="6.5" width="14.5" height="8.5" fill="#fff" stroke="#a9a9a9"/>
  <path d="M2.5 7V15" stroke="#a9a9a9"/>
  <path d="M7 7V15M11 7V15M2 10H6M8 10H10M12 10H14M2 13H6M8 13H10M12 13H14" stroke="#ccd8ee" stroke-width="1"/></svg><div style="position:absolute;left:642px;top:357px;width:410px;height:20px;background:#f8aa8c"></div><svg style="position:absolute;left:624px;top:358px;overflow:visible" width="16" height="16"><rect x="5.5" y="1.5" width="9.5" height="9.5" fill="#eef4fc" stroke="#cdb06a"/>
  <rect x="6" y="2" width="9" height="3" fill="#3f7ad8"/>
  <rect x="7" y="3" width="1" height="1" fill="#e8f0ff"/><rect x="9" y="3" width="2" height="1" fill="#e8f0ff"/><rect x="12" y="3" width="2" height="1" fill="#e8f0ff"/>
  <rect x="6" y="5" width="1" height="5.5" fill="#3f7ad8"/>
  <path d="M8 7.5H15M11.5 5V11" stroke="#d8e0ee"/>
  <rect x="6" y="5" width="1" height="1" fill="#1a7a34"/><rect x="6" y="6" width="1" height="1" fill="#1a7a34"/><rect x="5" y="7" width="3" height="1" fill="#1a7a34"/><rect x="6" y="7" width="1" height="1" fill="url(#gPyr)"/><rect x="5" y="8" width="3" height="1" fill="#1a7a34"/><rect x="6" y="8" width="1" height="1" fill="url(#gPyr)"/><rect x="4" y="9" width="5" height="1" fill="#1a7a34"/><rect x="5" y="9" width="3" height="1" fill="url(#gPyr)"/><rect x="4" y="10" width="5" height="1" fill="#1a7a34"/><rect x="5" y="10" width="3" height="1" fill="url(#gPyr)"/><rect x="3" y="11" width="7" height="1" fill="#1a7a34"/><rect x="4" y="11" width="5" height="1" fill="url(#gPyr)"/><rect x="3" y="12" width="7" height="1" fill="#1a7a34"/><rect x="4" y="12" width="5" height="1" fill="url(#gPyr)"/><rect x="2" y="13" width="9" height="1" fill="#1a7a34"/><rect x="3" y="13" width="7" height="1" fill="url(#gPyr)"/><rect x="2" y="14" width="9" height="1" fill="#1a7a34"/><rect x="3" y="14" width="7" height="1" fill="url(#gPyr)"/><rect x="1" y="15" width="11" height="1" fill="#1a7a34"/></svg><div style="position:absolute;left:642px;top:377px;width:410px;height:20px;background:#f8aa8c"></div><svg style="position:absolute;left:624px;top:378px;overflow:visible" width="16" height="16"><rect x="5.5" y="1.5" width="9.5" height="9.5" fill="#eef4fc" stroke="#cdb06a"/>
  <rect x="6" y="2" width="9" height="3" fill="#3f7ad8"/>
  <rect x="7" y="3" width="1" height="1" fill="#e8f0ff"/><rect x="9" y="3" width="2" height="1" fill="#e8f0ff"/><rect x="12" y="3" width="2" height="1" fill="#e8f0ff"/>
  <rect x="6" y="5" width="1" height="5.5" fill="#3f7ad8"/>
  <path d="M8 7.5H15M11.5 5V11" stroke="#d8e0ee"/>
  <rect x="6" y="5" width="1" height="1" fill="#1a7a34"/><rect x="6" y="6" width="1" height="1" fill="#1a7a34"/><rect x="5" y="7" width="3" height="1" fill="#1a7a34"/><rect x="6" y="7" width="1" height="1" fill="url(#gPyr)"/><rect x="5" y="8" width="3" height="1" fill="#1a7a34"/><rect x="6" y="8" width="1" height="1" fill="url(#gPyr)"/><rect x="4" y="9" width="5" height="1" fill="#1a7a34"/><rect x="5" y="9" width="3" height="1" fill="url(#gPyr)"/><rect x="4" y="10" width="5" height="1" fill="#1a7a34"/><rect x="5" y="10" width="3" height="1" fill="url(#gPyr)"/><rect x="3" y="11" width="7" height="1" fill="#1a7a34"/><rect x="4" y="11" width="5" height="1" fill="url(#gPyr)"/><rect x="3" y="12" width="7" height="1" fill="#1a7a34"/><rect x="4" y="12" width="5" height="1" fill="url(#gPyr)"/><rect x="2" y="13" width="9" height="1" fill="#1a7a34"/><rect x="3" y="13" width="7" height="1" fill="url(#gPyr)"/><rect x="2" y="14" width="9" height="1" fill="#1a7a34"/><rect x="3" y="14" width="7" height="1" fill="url(#gPyr)"/><rect x="1" y="15" width="11" height="1" fill="#1a7a34"/></svg><svg style="position:absolute;left:589px;top:403px" width="6" height="6"><polygon points="6,0 6,6 0,6" fill="#333"/></svg><svg style="position:absolute;left:604px;top:398px;overflow:visible" width="16" height="16"><rect x="3.5" y="3.5" width="12" height="11.5" fill="#fff" stroke="#a9a9a9"/>
  <path d="M4 5.5H15" stroke="#a9a9a9"/>
  <path d="M8 4V15M12 4V15M5 9.5H7M9 9.5H11M13 9.5H15M5 12.5H7M9 12.5H11M13 12.5H15" stroke="#ccd8ee"/>
  <rect x="1" y="6" width="3.5" height="9" fill="#1299e6"/>
  <path d="M2.8 7.5V8.5M2.8 10V11.5M2.8 12.8V14" stroke="#fff" stroke-width="1"/></svg><svg style="position:absolute;left:609px;top:423px" width="6" height="6"><polygon points="6,0 6,6 0,6" fill="#333"/></svg><svg style="position:absolute;left:624px;top:418px;overflow:visible" width="16" height="16"><rect x="1.5" y="2.5" width="5" height="12.5" fill="#fff" stroke="#86aee8"/>
  <path d="M2 5.5H4.5M2 8.5H4.5M2 11.5H4.5" stroke="#86aee8"/>
  <rect x="7" y="6" width="8.5" height="9" fill="#fff"/>
  <path d="M15.5 6V15.5H7" stroke="#a9a9a9" fill="none"/>
  <rect x="7.5" y="2.5" width="7.5" height="3.5" fill="#dff0ff" stroke="#3d6ab8" stroke-width="1.2"/>
  <path d="M8 8.5H10M11 8.5H14M8 11.5H10M11 11.5H14" stroke="#5a86d0"/></svg><div style="position:absolute;left:662px;top:437px;width:390px;height:20px;background:#f8aa8c"></div><svg style="position:absolute;left:629px;top:443px" width="6" height="6"><polygon points="6,0 6,6 0,6" fill="#333"/></svg><svg style="position:absolute;left:644px;top:438px;overflow:visible" width="16" height="16"><rect x="5.5" y="1.5" width="9.5" height="9" fill="#f2f6fc" stroke="#ccaa5a"/>
  <path d="M6 4.5H15M8.5 2V10M11.5 2V6" stroke="#d4dcec"/>
  <rect x="10.5" y="6.5" width="4.5" height="4.5" fill="#fff0a8" stroke="#d4880e" stroke-width="1.1"/>
  <path d="M12.75 7V11M11 8.75H15" stroke="#f8e090" stroke-width="0.6"/><rect x="6" y="5" width="1" height="1" fill="#1a7a34"/><rect x="6" y="6" width="1" height="1" fill="#1a7a34"/><rect x="5" y="7" width="3" height="1" fill="#1a7a34"/><rect x="6" y="7" width="1" height="1" fill="url(#gPyr)"/><rect x="5" y="8" width="3" height="1" fill="#1a7a34"/><rect x="6" y="8" width="1" height="1" fill="url(#gPyr)"/><rect x="4" y="9" width="5" height="1" fill="#1a7a34"/><rect x="5" y="9" width="3" height="1" fill="url(#gPyr)"/><rect x="4" y="10" width="5" height="1" fill="#1a7a34"/><rect x="5" y="10" width="3" height="1" fill="url(#gPyr)"/><rect x="3" y="11" width="7" height="1" fill="#1a7a34"/><rect x="4" y="11" width="5" height="1" fill="url(#gPyr)"/><rect x="3" y="12" width="7" height="1" fill="#1a7a34"/><rect x="4" y="12" width="5" height="1" fill="url(#gPyr)"/><rect x="2" y="13" width="9" height="1" fill="#1a7a34"/><rect x="3" y="13" width="7" height="1" fill="url(#gPyr)"/><rect x="2" y="14" width="9" height="1" fill="#1a7a34"/><rect x="3" y="14" width="7" height="1" fill="url(#gPyr)"/><rect x="1" y="15" width="11" height="1" fill="#1a7a34"/></svg><svg style="position:absolute;left:649px;top:463px" width="6" height="6"><polygon points="6,0 6,6 0,6" fill="#333"/></svg><svg style="position:absolute;left:664px;top:458px;overflow:visible" width="16" height="16"><rect x="5.5" y="1.5" width="9.5" height="9" fill="#f2f6fc" stroke="#ccaa5a"/>
  <path d="M6 4.5H15M8.5 2V10M11.5 2V6" stroke="#d4dcec"/>
  <rect x="10.5" y="6.5" width="4.5" height="4.5" fill="#fff0a8" stroke="#d4880e" stroke-width="1.1"/>
  <path d="M12.75 7V11M11 8.75H15" stroke="#f8e090" stroke-width="0.6"/><rect x="6" y="5" width="1" height="1" fill="#1a7a34"/><rect x="6" y="6" width="1" height="1" fill="#1a7a34"/><rect x="5" y="7" width="3" height="1" fill="#1a7a34"/><rect x="6" y="7" width="1" height="1" fill="url(#gPyr)"/><rect x="5" y="8" width="3" height="1" fill="#1a7a34"/><rect x="6" y="8" width="1" height="1" fill="url(#gPyr)"/><rect x="4" y="9" width="5" height="1" fill="#1a7a34"/><rect x="5" y="9" width="3" height="1" fill="url(#gPyr)"/><rect x="4" y="10" width="5" height="1" fill="#1a7a34"/><rect x="5" y="10" width="3" height="1" fill="url(#gPyr)"/><rect x="3" y="11" width="7" height="1" fill="#1a7a34"/><rect x="4" y="11" width="5" height="1" fill="url(#gPyr)"/><rect x="3" y="12" width="7" height="1" fill="#1a7a34"/><rect x="4" y="12" width="5" height="1" fill="url(#gPyr)"/><rect x="2" y="13" width="9" height="1" fill="#1a7a34"/><rect x="3" y="13" width="7" height="1" fill="url(#gPyr)"/><rect x="2" y="14" width="9" height="1" fill="#1a7a34"/><rect x="3" y="14" width="7" height="1" fill="url(#gPyr)"/><rect x="1" y="15" width="11" height="1" fill="#1a7a34"/>
  <path d="M6.8 2.3C5.2 1.6 4.2 2.6 3.9 4.5L3.3 8.2L2.6 11.4M1.2 6.2H5.6" stroke="#1f46ff" stroke-width="1.5" fill="none"/>
  <path d="M4.8 9.3L6 10.6L5 12" stroke="#1f46ff" stroke-width="1.3" fill="none"/></svg><div style="position:absolute;left:702px;top:477px;width:350px;height:20px;background:#f8aa8c"></div><svg style="position:absolute;left:684px;top:478px;overflow:visible" width="16" height="16"><rect x="5.5" y="1.5" width="9.5" height="9.5" fill="#eef4fc" stroke="#cdb06a"/>
  <rect x="6" y="2" width="9" height="3" fill="#3f7ad8"/>
  <rect x="7" y="3" width="1" height="1" fill="#e8f0ff"/><rect x="9" y="3" width="2" height="1" fill="#e8f0ff"/><rect x="12" y="3" width="2" height="1" fill="#e8f0ff"/>
  <rect x="6" y="5" width="1" height="5.5" fill="#3f7ad8"/>
  <path d="M8 7.5H15M11.5 5V11" stroke="#d8e0ee"/>
  <rect x="6" y="5" width="1" height="1" fill="#1a7a34"/><rect x="6" y="6" width="1" height="1" fill="#1a7a34"/><rect x="5" y="7" width="3" height="1" fill="#1a7a34"/><rect x="6" y="7" width="1" height="1" fill="url(#gPyr)"/><rect x="5" y="8" width="3" height="1" fill="#1a7a34"/><rect x="6" y="8" width="1" height="1" fill="url(#gPyr)"/><rect x="4" y="9" width="5" height="1" fill="#1a7a34"/><rect x="5" y="9" width="3" height="1" fill="url(#gPyr)"/><rect x="4" y="10" width="5" height="1" fill="#1a7a34"/><rect x="5" y="10" width="3" height="1" fill="url(#gPyr)"/><rect x="3" y="11" width="7" height="1" fill="#1a7a34"/><rect x="4" y="11" width="5" height="1" fill="url(#gPyr)"/><rect x="3" y="12" width="7" height="1" fill="#1a7a34"/><rect x="4" y="12" width="5" height="1" fill="url(#gPyr)"/><rect x="2" y="13" width="9" height="1" fill="#1a7a34"/><rect x="3" y="13" width="7" height="1" fill="url(#gPyr)"/><rect x="2" y="14" width="9" height="1" fill="#1a7a34"/><rect x="3" y="14" width="7" height="1" fill="url(#gPyr)"/><rect x="1" y="15" width="11" height="1" fill="#1a7a34"/></svg><div style="position:absolute;left:702px;top:497px;width:350px;height:20px;background:#f8aa8c"></div><svg style="position:absolute;left:684px;top:498px;overflow:visible" width="16" height="16"><rect x="1.7" y="2.7" width="6.2" height="4.8" rx="0.4" fill="#fff" stroke="#000" stroke-width="1.5"/>
  <rect x="3.5" y="4.3" width="2" height="1.6" fill="#000"/>
  <rect x="8.7" y="10.5" width="5.4" height="4.8" rx="0.4" fill="#fff" stroke="#000" stroke-width="1.5"/>
  <rect x="10.4" y="12.1" width="2" height="1.6" fill="#000"/>
  <path d="M3.6 13.4L13.6 3.6" stroke="#000" stroke-width="3" stroke-linecap="square"/>
  <path d="M3.8 13.2L13.4 3.8" stroke="#20e020" stroke-width="1.3"/></svg><svg style="position:absolute;left:702px;top:497px;overflow:visible" width="10" height="20"><path d="M3.6 16.3L6.4 6.2" stroke="#0000ff" stroke-width="1.25"/></svg><div style="position:absolute;left:702px;top:517px;width:350px;height:20px;background:#f8aa8c"></div><svg style="position:absolute;left:684px;top:518px;overflow:visible" width="16" height="16"><rect x="5.5" y="1.5" width="9.5" height="9.5" fill="#eef4fc" stroke="#cdb06a"/>
  <rect x="6" y="2" width="9" height="3" fill="#3f7ad8"/>
  <rect x="7" y="3" width="1" height="1" fill="#e8f0ff"/><rect x="9" y="3" width="2" height="1" fill="#e8f0ff"/><rect x="12" y="3" width="2" height="1" fill="#e8f0ff"/>
  <rect x="6" y="5" width="1" height="5.5" fill="#3f7ad8"/>
  <path d="M8 7.5H15M11.5 5V11" stroke="#d8e0ee"/>
  <rect x="6" y="5" width="1" height="1" fill="#1a7a34"/><rect x="6" y="6" width="1" height="1" fill="#1a7a34"/><rect x="5" y="7" width="3" height="1" fill="#1a7a34"/><rect x="6" y="7" width="1" height="1" fill="url(#gPyr)"/><rect x="5" y="8" width="3" height="1" fill="#1a7a34"/><rect x="6" y="8" width="1" height="1" fill="url(#gPyr)"/><rect x="4" y="9" width="5" height="1" fill="#1a7a34"/><rect x="5" y="9" width="3" height="1" fill="url(#gPyr)"/><rect x="4" y="10" width="5" height="1" fill="#1a7a34"/><rect x="5" y="10" width="3" height="1" fill="url(#gPyr)"/><rect x="3" y="11" width="7" height="1" fill="#1a7a34"/><rect x="4" y="11" width="5" height="1" fill="url(#gPyr)"/><rect x="3" y="12" width="7" height="1" fill="#1a7a34"/><rect x="4" y="12" width="5" height="1" fill="url(#gPyr)"/><rect x="2" y="13" width="9" height="1" fill="#1a7a34"/><rect x="3" y="13" width="7" height="1" fill="url(#gPyr)"/><rect x="2" y="14" width="9" height="1" fill="#1a7a34"/><rect x="3" y="14" width="7" height="1" fill="url(#gPyr)"/><rect x="1" y="15" width="11" height="1" fill="#1a7a34"/></svg><svg style="position:absolute;left:629px;top:543px" width="6" height="6"><polygon points="6,0 6,6 0,6" fill="#333"/></svg><svg style="position:absolute;left:644px;top:538px;overflow:visible" width="16" height="16"><rect x="5.5" y="1.5" width="9.5" height="9" fill="#f2f6fc" stroke="#ccaa5a"/>
  <path d="M6 4.5H15M8.5 2V10M11.5 2V6" stroke="#d4dcec"/>
  <rect x="10.5" y="6.5" width="4.5" height="4.5" fill="#fff0a8" stroke="#d4880e" stroke-width="1.1"/>
  <path d="M12.75 7V11M11 8.75H15" stroke="#f8e090" stroke-width="0.6"/><rect x="6" y="5" width="1" height="1" fill="#1a7a34"/><rect x="6" y="6" width="1" height="1" fill="#1a7a34"/><rect x="5" y="7" width="3" height="1" fill="#1a7a34"/><rect x="6" y="7" width="1" height="1" fill="url(#gPyr)"/><rect x="5" y="8" width="3" height="1" fill="#1a7a34"/><rect x="6" y="8" width="1" height="1" fill="url(#gPyr)"/><rect x="4" y="9" width="5" height="1" fill="#1a7a34"/><rect x="5" y="9" width="3" height="1" fill="url(#gPyr)"/><rect x="4" y="10" width="5" height="1" fill="#1a7a34"/><rect x="5" y="10" width="3" height="1" fill="url(#gPyr)"/><rect x="3" y="11" width="7" height="1" fill="#1a7a34"/><rect x="4" y="11" width="5" height="1" fill="url(#gPyr)"/><rect x="3" y="12" width="7" height="1" fill="#1a7a34"/><rect x="4" y="12" width="5" height="1" fill="url(#gPyr)"/><rect x="2" y="13" width="9" height="1" fill="#1a7a34"/><rect x="3" y="13" width="7" height="1" fill="url(#gPyr)"/><rect x="2" y="14" width="9" height="1" fill="#1a7a34"/><rect x="3" y="14" width="7" height="1" fill="url(#gPyr)"/><rect x="1" y="15" width="11" height="1" fill="#1a7a34"/></svg><svg style="position:absolute;left:649px;top:563px" width="6" height="6"><polygon points="6,0 6,6 0,6" fill="#333"/></svg><svg style="position:absolute;left:664px;top:558px;overflow:visible" width="16" height="16"><rect x="5.5" y="1.5" width="9.5" height="9" fill="#f2f6fc" stroke="#ccaa5a"/>
  <path d="M6 4.5H15M8.5 2V10M11.5 2V6" stroke="#d4dcec"/>
  <rect x="10.5" y="6.5" width="4.5" height="4.5" fill="#fff0a8" stroke="#d4880e" stroke-width="1.1"/>
  <path d="M12.75 7V11M11 8.75H15" stroke="#f8e090" stroke-width="0.6"/><rect x="6" y="5" width="1" height="1" fill="#1a7a34"/><rect x="6" y="6" width="1" height="1" fill="#1a7a34"/><rect x="5" y="7" width="3" height="1" fill="#1a7a34"/><rect x="6" y="7" width="1" height="1" fill="url(#gPyr)"/><rect x="5" y="8" width="3" height="1" fill="#1a7a34"/><rect x="6" y="8" width="1" height="1" fill="url(#gPyr)"/><rect x="4" y="9" width="5" height="1" fill="#1a7a34"/><rect x="5" y="9" width="3" height="1" fill="url(#gPyr)"/><rect x="4" y="10" width="5" height="1" fill="#1a7a34"/><rect x="5" y="10" width="3" height="1" fill="url(#gPyr)"/><rect x="3" y="11" width="7" height="1" fill="#1a7a34"/><rect x="4" y="11" width="5" height="1" fill="url(#gPyr)"/><rect x="3" y="12" width="7" height="1" fill="#1a7a34"/><rect x="4" y="12" width="5" height="1" fill="url(#gPyr)"/><rect x="2" y="13" width="9" height="1" fill="#1a7a34"/><rect x="3" y="13" width="7" height="1" fill="url(#gPyr)"/><rect x="2" y="14" width="9" height="1" fill="#1a7a34"/><rect x="3" y="14" width="7" height="1" fill="url(#gPyr)"/><rect x="1" y="15" width="11" height="1" fill="#1a7a34"/></svg><div style="position:absolute;left:702px;top:577px;width:350px;height:20px;background:#f8aa8c"></div><svg style="position:absolute;left:669px;top:583px" width="6" height="6"><polygon points="6,0 6,6 0,6" fill="#333"/></svg><svg style="position:absolute;left:684px;top:578px;overflow:visible" width="16" height="16"><rect x="5.5" y="1.5" width="9.5" height="9.5" fill="#eef4fc" stroke="#cdb06a"/>
  <rect x="6" y="2" width="9" height="3" fill="#3f7ad8"/>
  <rect x="7" y="3" width="1" height="1" fill="#e8f0ff"/><rect x="9" y="3" width="2" height="1" fill="#e8f0ff"/><rect x="12" y="3" width="2" height="1" fill="#e8f0ff"/>
  <rect x="6" y="5" width="1" height="5.5" fill="#3f7ad8"/>
  <path d="M8 7.5H15M11.5 5V11" stroke="#d8e0ee"/>
  <rect x="6" y="5" width="1" height="1" fill="#1a7a34"/><rect x="6" y="6" width="1" height="1" fill="#1a7a34"/><rect x="5" y="7" width="3" height="1" fill="#1a7a34"/><rect x="6" y="7" width="1" height="1" fill="url(#gPyr)"/><rect x="5" y="8" width="3" height="1" fill="#1a7a34"/><rect x="6" y="8" width="1" height="1" fill="url(#gPyr)"/><rect x="4" y="9" width="5" height="1" fill="#1a7a34"/><rect x="5" y="9" width="3" height="1" fill="url(#gPyr)"/><rect x="4" y="10" width="5" height="1" fill="#1a7a34"/><rect x="5" y="10" width="3" height="1" fill="url(#gPyr)"/><rect x="3" y="11" width="7" height="1" fill="#1a7a34"/><rect x="4" y="11" width="5" height="1" fill="url(#gPyr)"/><rect x="3" y="12" width="7" height="1" fill="#1a7a34"/><rect x="4" y="12" width="5" height="1" fill="url(#gPyr)"/><rect x="2" y="13" width="9" height="1" fill="#1a7a34"/><rect x="3" y="13" width="7" height="1" fill="url(#gPyr)"/><rect x="2" y="14" width="9" height="1" fill="#1a7a34"/><rect x="3" y="14" width="7" height="1" fill="url(#gPyr)"/><rect x="1" y="15" width="11" height="1" fill="#1a7a34"/></svg><div style="position:absolute;left:722px;top:597px;width:330px;height:20px;background:#f8aa8c"></div><svg style="position:absolute;left:704px;top:598px;overflow:visible" width="16" height="16"><rect x="2" y="4" width="12" height="10" fill="#46bf56"/>
  <path d="M2.5 4.5H13.5V13.5H2.5Z" stroke="#2da83e" fill="none"/>
  <rect x="3" y="6" width="10" height="2" fill="#000"/>
  <rect x="3" y="10" width="10" height="2" fill="#000"/></svg><div style="position:absolute;left:722px;top:617px;width:330px;height:20px;background:#f8aa8c"></div><svg style="position:absolute;left:704px;top:618px;overflow:visible" width="16" height="16"><rect x="2" y="4" width="12" height="10" fill="#46bf56"/>
  <path d="M2.5 4.5H13.5V13.5H2.5Z" stroke="#2da83e" fill="none"/>
  <rect x="3" y="6" width="10" height="2" fill="#000"/>
  <rect x="3" y="10" width="10" height="2" fill="#000"/></svg><div style="position:absolute;left:722px;top:637px;width:330px;height:20px;background:#f8aa8c"></div><svg style="position:absolute;left:704px;top:638px;overflow:visible" width="16" height="16"><rect x="2" y="4" width="12" height="10" fill="#46bf56"/>
  <path d="M2.5 4.5H13.5V13.5H2.5Z" stroke="#2da83e" fill="none"/>
  <rect x="3" y="6" width="10" height="2" fill="#000"/>
  <rect x="3" y="10" width="10" height="2" fill="#000"/></svg><div style="position:absolute;left:722px;top:657px;width:330px;height:20px;background:#f8aa8c"></div><svg style="position:absolute;left:704px;top:658px;overflow:visible" width="16" height="16"><rect x="2" y="4" width="12" height="10" fill="#46bf56"/>
  <path d="M2.5 4.5H13.5V13.5H2.5Z" stroke="#2da83e" fill="none"/>
  <rect x="3" y="6" width="10" height="2" fill="#000"/>
  <rect x="3" y="10" width="10" height="2" fill="#000"/></svg><div style="position:absolute;left:722px;top:677px;width:330px;height:20px;background:#f8aa8c"></div><svg style="position:absolute;left:704px;top:678px;overflow:visible" width="16" height="16"><rect x="2" y="4" width="12" height="10" fill="#46bf56"/>
  <path d="M2.5 4.5H13.5V13.5H2.5Z" stroke="#2da83e" fill="none"/>
  <rect x="3" y="6" width="10" height="2" fill="#000"/>
  <rect x="3" y="10" width="10" height="2" fill="#000"/></svg>
<div style="position:absolute;left:42.00px;top:14px;font:11px 'Liberation Sans';line-height:15px;color:#333333;white-space:pre;letter-spacing:-0.286px">Comparison Mode</div><div style="position:absolute;left:11.00px;top:50px;font:bold 13px 'Liberation Sans';line-height:15px;color:#333;white-space:pre;letter-spacing:-0.017px">BI2 - Analysis for Queries VMM_M001_Q001 (Backlog Overview)</div><div style="position:absolute;left:125.00px;top:79px;font:12px 'Liberation Sans';line-height:15px;color:#333333;white-space:pre;letter-spacing:-0.125px">Show UIDs</div><div style="position:absolute;left:208.00px;top:79px;font:12px 'Liberation Sans';line-height:15px;color:#333333;white-space:pre;letter-spacing:0.000px">Show InfoObject descr.</div><div style="position:absolute;left:19.00px;top:107px;font:11px 'Liberation Sans';line-height:15px;color:#333333;white-space:pre;letter-spacing:-0.125px">Based on InfoProvider</div><div style="position:absolute;left:164.20px;top:107px;font:11px 'Liberation Sans';line-height:15px;color:#333333;white-space:pre;letter-spacing:-0.247px">MultiProvider Purchasing (VMM_M001)</div><div style="position:absolute;left:19.00px;top:128px;font:11px 'Liberation Sans';line-height:15px;color:#333333;white-space:pre;letter-spacing:-0.058px">Query Version</div><div style="position:absolute;left:144.00px;top:128px;font:11px 'Liberation Sans';line-height:15px;color:#333333;white-space:pre;letter-spacing:0.500px">7.x</div><div style="position:absolute;left:19.00px;top:146px;font:11px 'Liberation Sans';line-height:15px;color:#333333;white-space:pre;letter-spacing:0.014px">Creation</div><div style="position:absolute;left:145.00px;top:146px;font:11px 'Liberation Sans';line-height:15px;color:#333333;white-space:pre;letter-spacing:0.144px">04/20/2014 15:47:45</div><div style="position:absolute;left:19.00px;top:164px;font:11px 'Liberation Sans';line-height:15px;color:#333333;white-space:pre;letter-spacing:-0.110px">Last change</div><div style="position:absolute;left:144.00px;top:164px;font:11px 'Liberation Sans';line-height:15px;color:#333333;white-space:pre;letter-spacing:-0.037px">MHARING, 03.06.2020 07:46:56</div><div style="position:absolute;left:19.00px;top:182px;font:11px 'Liberation Sans';line-height:15px;color:#333333;white-space:pre;letter-spacing:-0.100px">Last usage</div><div style="position:absolute;left:144.00px;top:182px;font:11px 'Liberation Sans';line-height:15px;color:#333333;white-space:pre;letter-spacing:0.200px">21.07.2020 07:47:31</div><div style="position:absolute;left:19.00px;top:200px;font:11px 'Liberation Sans';line-height:15px;color:#333333;white-space:pre;letter-spacing:-0.271px">Scenario</div><div style="position:absolute;left:144.00px;top:200px;font:11px 'Liberation Sans';line-height:15px;color:#333333;white-space:pre;letter-spacing:0.000px">-</div><div style="position:absolute;left:19.00px;top:218px;font:11px 'Liberation Sans';line-height:15px;color:#333333;white-space:pre;letter-spacing:-0.167px">Contains Cell Definitions</div><div style="position:absolute;left:144.00px;top:218px;font:11px 'Liberation Sans';line-height:15px;color:#333333;white-space:pre;letter-spacing:-1.000px">No</div><div style="position:absolute;left:13.70px;top:240px;font:11px 'Liberation Sans';line-height:15px;color:#333333;white-space:pre;letter-spacing:-0.467px">Name</div><div style="position:absolute;left:51.00px;top:261px;font:11px 'Liberation Sans';line-height:15px;color:#333333;white-space:pre;letter-spacing:-0.258px">[VMM_M001_Q001] Backlog Overview</div><div style="position:absolute;left:70.00px;top:281px;font:11px 'Liberation Sans';line-height:15px;color:#333333;white-space:pre;letter-spacing:-0.125px">Sheet</div><div style="position:absolute;left:90.00px;top:301px;font:11px 'Liberation Sans';line-height:15px;color:#333333;white-space:pre;letter-spacing:-0.089px">Free Characteristics</div><div style="position:absolute;left:111.00px;top:321px;font:11px 'Liberation Sans';line-height:15px;color:#0000ff;white-space:pre;letter-spacing:-0.460px">[0SUPPLIER] Goods Supplier</div><div style="position:absolute;left:90.00px;top:341px;font:11px 'Liberation Sans';line-height:15px;color:#333333;white-space:pre;letter-spacing:-0.267px">Rows</div><div style="position:absolute;left:111.00px;top:361px;font:11px 'Liberation Sans';line-height:15px;color:#333333;white-space:pre;letter-spacing:-0.413px">[0VENDOR] Vendor</div><div style="position:absolute;left:131.00px;top:381px;font:11px 'Liberation Sans';line-height:15px;color:#0000ff;white-space:pre;letter-spacing:-0.405px">[0P_FIL_VENDOR] Vendor</div><div style="position:absolute;left:90.00px;top:401px;font:11px 'Liberation Sans';line-height:15px;color:#333333;white-space:pre;letter-spacing:-0.467px">Columns</div><div style="position:absolute;left:110.00px;top:421px;font:11px 'Liberation Sans';line-height:15px;color:#333333;white-space:pre;letter-spacing:-0.200px">Key Figures</div><div style="position:absolute;left:130.00px;top:441px;font:11px 'Liberation Sans';line-height:15px;color:#0000ff;white-space:pre;letter-spacing:-0.729px">9IROG4JRJS0GS5OVQDFSRBA8K</div><div style="position:absolute;left:151.00px;top:461px;font:11px 'Liberation Sans';line-height:15px;color:#333333;white-space:pre;letter-spacing:-0.174px">[VMM_M001_CKF001] Average delivery costs</div><div style="position:absolute;left:171.00px;top:481px;font:11px 'Liberation Sans';line-height:15px;color:#0000ff;white-space:pre;letter-spacing:-0.321px">[0DLV_COSTS] &#x27;Delivery Costs&#x27;</div><div style="position:absolute;left:171.00px;top:521px;font:11px 'Liberation Sans';line-height:15px;color:#0000ff;white-space:pre;letter-spacing:-0.187px">[0CONTR_ITEM] &#x27;Number of contract items&#x27;</div><div style="position:absolute;left:131.00px;top:541px;font:11px 'Liberation Sans';line-height:15px;color:#333333;white-space:pre;letter-spacing:-0.185px">Average delivery costs BRICS</div><div style="position:absolute;left:151.00px;top:561px;font:11px 'Liberation Sans';line-height:15px;color:#333333;white-space:pre;letter-spacing:-0.244px">[VMM_M001_RKF004] Average delivery costs BRICS</div><div style="position:absolute;left:171.00px;top:581px;font:11px 'Liberation Sans';line-height:15px;color:#333333;white-space:pre;letter-spacing:-0.282px">[0COUNTRY] Country</div><div style="position:absolute;left:191.00px;top:601px;font:11px 'Liberation Sans';line-height:15px;color:#0000ff;white-space:pre;letter-spacing:-0.300px">[BR] Brazil</div><div style="position:absolute;left:191.00px;top:621px;font:11px 'Liberation Sans';line-height:15px;color:#0000ff;white-space:pre;letter-spacing:-0.212px">[RU] Russian Fed.</div><div style="position:absolute;left:191.00px;top:641px;font:11px 'Liberation Sans';line-height:15px;color:#0000ff;white-space:pre;letter-spacing:0.100px">[IN] India</div><div style="position:absolute;left:191.00px;top:661px;font:11px 'Liberation Sans';line-height:15px;color:#0000ff;white-space:pre;letter-spacing:-0.322px">[CN] China</div><div style="position:absolute;left:191.00px;top:681px;font:11px 'Liberation Sans';line-height:15px;color:#0000ff;white-space:pre;letter-spacing:-0.050px">[ZA] South Africa</div><div style="position:absolute;left:71.00px;top:701px;font:11px 'Liberation Sans';line-height:15px;color:#333333;white-space:pre;letter-spacing:0.000px">Variable Sequence</div><div style="position:absolute;left:542.00px;top:50px;font:bold 13px 'Liberation Sans';line-height:15px;color:#333;white-space:pre;letter-spacing:-0.017px">BI1 - Analysis for Queries VMM_M001_Q001 (Backlog Overview)</div><div style="position:absolute;left:679.00px;top:79px;font:12px 'Liberation Sans';line-height:15px;color:#333333;white-space:pre;letter-spacing:-0.125px">Show UIDs</div><div style="position:absolute;left:762.00px;top:79px;font:12px 'Liberation Sans';line-height:15px;color:#333333;white-space:pre;letter-spacing:0.000px">Show InfoObject descr.</div><div style="position:absolute;left:550.00px;top:107px;font:11px 'Liberation Sans';line-height:15px;color:#333333;white-space:pre;letter-spacing:-0.125px">Based on InfoProvider</div><div style="position:absolute;left:697.00px;top:107px;font:11px 'Liberation Sans';line-height:15px;color:#333333;white-space:pre;letter-spacing:-0.550px">VMM_M001 (VMM_M001)</div><div style="position:absolute;left:550.00px;top:128px;font:11px 'Liberation Sans';line-height:15px;color:#333333;white-space:pre;letter-spacing:-0.058px">Query Version</div><div style="position:absolute;left:675.00px;top:128px;font:11px 'Liberation Sans';line-height:15px;color:#333333;white-space:pre;letter-spacing:0.500px">7.x</div><div style="position:absolute;left:550.00px;top:146px;font:11px 'Liberation Sans';line-height:15px;color:#333333;white-space:pre;letter-spacing:0.014px">Creation</div><div style="position:absolute;left:676.00px;top:146px;font:11px 'Liberation Sans';line-height:15px;color:#333333;white-space:pre;letter-spacing:0.133px">08/26/2015 13:15:39</div><div style="position:absolute;left:550.00px;top:164px;font:11px 'Liberation Sans';line-height:15px;color:#333333;white-space:pre;letter-spacing:-0.110px">Last change</div><div style="position:absolute;left:676.00px;top:164px;font:11px 'Liberation Sans';line-height:15px;color:#333333;white-space:pre;letter-spacing:-0.043px">TSCHMIDT, 21.07.2019 09:09:32</div><div style="position:absolute;left:550.00px;top:182px;font:11px 'Liberation Sans';line-height:15px;color:#333333;white-space:pre;letter-spacing:-0.100px">Last usage</div><div style="position:absolute;left:675.00px;top:182px;font:11px 'Liberation Sans';line-height:15px;color:#333333;white-space:pre;letter-spacing:0.206px">21.07.2019 09:09:32</div><div style="position:absolute;left:550.00px;top:200px;font:11px 'Liberation Sans';line-height:15px;color:#333333;white-space:pre;letter-spacing:-0.271px">Scenario</div><div style="position:absolute;left:675.00px;top:200px;font:11px 'Liberation Sans';line-height:15px;color:#333333;white-space:pre;letter-spacing:0.000px">-</div><div style="position:absolute;left:550.00px;top:218px;font:11px 'Liberation Sans';line-height:15px;color:#333333;white-space:pre;letter-spacing:-0.167px">Contains Cell Definitions</div><div style="position:absolute;left:675.00px;top:218px;font:11px 'Liberation Sans';line-height:15px;color:#333333;white-space:pre;letter-spacing:-1.000px">No</div><div style="position:absolute;left:544.70px;top:240px;font:11px 'Liberation Sans';line-height:15px;color:#333333;white-space:pre;letter-spacing:-0.467px">Name</div><div style="position:absolute;left:582.00px;top:261px;font:11px 'Liberation Sans';line-height:15px;color:#333333;white-space:pre;letter-spacing:-0.258px">[VMM_M001_Q001] Backlog Overview</div><div style="position:absolute;left:601.00px;top:281px;font:11px 'Liberation Sans';line-height:15px;color:#333333;white-space:pre;letter-spacing:-0.125px">Sheet</div><div style="position:absolute;left:621.00px;top:301px;font:11px 'Liberation Sans';line-height:15px;color:#333333;white-space:pre;letter-spacing:-0.089px">Free Characteristics</div><div style="position:absolute;left:642.00px;top:321px;font:11px 'Liberation Sans';line-height:15px;color:#0000ff;white-space:pre;letter-spacing:-0.324px">[0PSTNG_DATE] Posting date</div><div style="position:absolute;left:621.00px;top:341px;font:11px 'Liberation Sans';line-height:15px;color:#333333;white-space:pre;letter-spacing:-0.267px">Rows</div><div style="position:absolute;left:642.00px;top:361px;font:11px 'Liberation Sans';line-height:15px;color:#0000ff;white-space:pre;letter-spacing:-0.420px">[0VENDOR] Vendor</div><div style="position:absolute;left:642.00px;top:381px;font:11px 'Liberation Sans';line-height:15px;color:#0000ff;white-space:pre;letter-spacing:-0.417px">[0PLANT__0PURCH_ORG] Purchasing Org.</div><div style="position:absolute;left:621.00px;top:401px;font:11px 'Liberation Sans';line-height:15px;color:#333333;white-space:pre;letter-spacing:-0.467px">Columns</div><div style="position:absolute;left:641.00px;top:421px;font:11px 'Liberation Sans';line-height:15px;color:#333333;white-space:pre;letter-spacing:-0.200px">Key Figures</div><div style="position:absolute;left:662.00px;top:441px;font:11px 'Liberation Sans';line-height:15px;color:#0000ff;white-space:pre;letter-spacing:-0.033px">Average delivery costs</div><div style="position:absolute;left:682.00px;top:461px;font:11px 'Liberation Sans';line-height:15px;color:#333333;white-space:pre;letter-spacing:-0.174px">[VMM_M001_CKF001] Average delivery costs</div><div style="position:absolute;left:702.00px;top:481px;font:11px 'Liberation Sans';line-height:15px;color:#0000ff;white-space:pre;letter-spacing:-0.321px">[0DLV_COSTS] &#x27;Delivery Costs&#x27;</div><div style="position:absolute;left:702.00px;top:521px;font:11px 'Liberation Sans';line-height:15px;color:#0000ff;white-space:pre;letter-spacing:-0.187px">[0CONTR_ITEM] &#x27;Number of contract items&#x27;</div><div style="position:absolute;left:662.00px;top:541px;font:11px 'Liberation Sans';line-height:15px;color:#333333;white-space:pre;letter-spacing:-0.185px">Average delivery costs BRICS</div><div style="position:absolute;left:682.00px;top:561px;font:11px 'Liberation Sans';line-height:15px;color:#333333;white-space:pre;letter-spacing:-0.244px">[VMM_M001_RKF004] Average delivery costs BRICS</div><div style="position:absolute;left:702.00px;top:581px;font:11px 'Liberation Sans';line-height:15px;color:#0000ff;white-space:pre;letter-spacing:-0.276px">[0COUNTRY] Country Key</div><div style="position:absolute;left:722.00px;top:601px;font:11px 'Liberation Sans';line-height:15px;color:#0000ff;white-space:pre;letter-spacing:-0.300px">[BR] Brazil</div><div style="position:absolute;left:722.00px;top:621px;font:11px 'Liberation Sans';line-height:15px;color:#0000ff;white-space:pre;letter-spacing:-0.212px">[RU] Russian Fed.</div><div style="position:absolute;left:722.00px;top:641px;font:11px 'Liberation Sans';line-height:15px;color:#0000ff;white-space:pre;letter-spacing:0.100px">[IN] India</div><div style="position:absolute;left:722.00px;top:661px;font:11px 'Liberation Sans';line-height:15px;color:#0000ff;white-space:pre;letter-spacing:-0.322px">[CN] China</div><div style="position:absolute;left:722.00px;top:681px;font:11px 'Liberation Sans';line-height:15px;color:#0000ff;white-space:pre;letter-spacing:-0.050px">[ZA] South Africa</div>
<div style="position:absolute;left:0;top:706px;width:1062px;height:10px;background:#f7f7f7"></div>
<div style="position:absolute;left:0;top:40px;width:1px;height:676px;background:#a0a0a0"></div>
<div style="position:absolute;left:10px;top:706px;width:512px;height:1px;background:#a0a0a0"></div>
<div style="position:absolute;left:541px;top:706px;width:512px;height:1px;background:#a0a0a0"></div>
</body></html>
